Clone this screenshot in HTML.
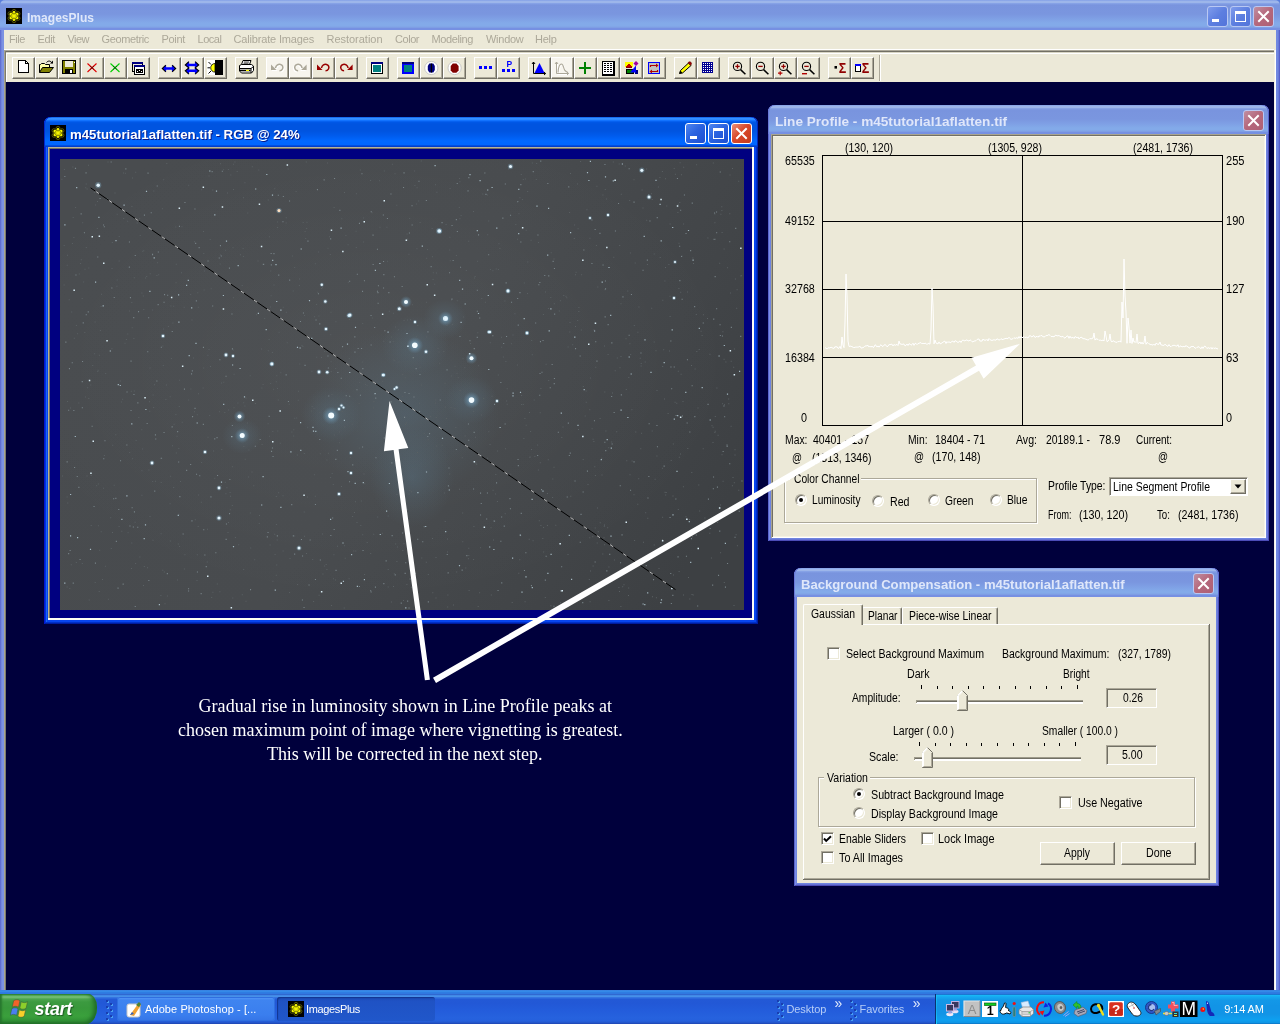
<!DOCTYPE html>
<html><head><meta charset="utf-8"><title>ImagesPlus</title>
<style>
html,body{margin:0;padding:0}
body{width:1280px;height:1024px;overflow:hidden;position:relative;background:#00003c;font-family:"Liberation Sans",sans-serif}
#root{position:absolute;left:0;top:0;width:1280px;height:1024px}
.a{position:absolute;box-sizing:border-box}
.t{position:absolute;white-space:pre;will-change:opacity}
svg{position:absolute;overflow:visible}
.tb{position:absolute;box-sizing:border-box;width:23px;height:22px;top:57px;background:#ece9d8;border:1px solid;border-color:#fff #716f64 #716f64 #fff;box-shadow:inset -1px -1px 0 #aca899}
.tb svg{left:2px;top:2px;width:16px;height:16px;will-change:opacity}
.btn{position:absolute;box-sizing:border-box;background:#ece9d8;border:1px solid;border-color:#fff #716f64 #716f64 #fff;box-shadow:inset -1px -1px 0 #aca899}
.sunk{position:absolute;box-sizing:border-box;border:1px solid;border-color:#aca899 #fff #fff #aca899;box-shadow:inset 1px 1px 0 #716f64}
.cb{position:absolute;box-sizing:border-box;width:13px;height:13px;background:#fff;border:1px solid;border-color:#aca899 #fff #fff #aca899;box-shadow:inset 1px 1px 0 #716f64,inset -1px -1px 0 #ece9d8}
.rb{position:absolute;box-sizing:border-box;width:12px;height:12px;border-radius:50%;background:#fff;border:1px solid;border-color:#aca899 #fff #fff #aca899;box-shadow:inset 1px 1px 0 #716f64,inset -1px -1px 0 #ece9d8}
.grp{position:absolute;box-sizing:border-box;border:1px solid #aca899;box-shadow:1px 1px 0 #fff,inset 1px 1px 0 #fff}
</style></head>
<body>
<div class="a" style="left:0px;top:0px;width:1280px;height:30px;background:linear-gradient(to bottom,#7a98e6 0,#9db6ea 1px,#9db6ea 2.5px,#86a2e6 3.5px,#7994de 5px,#7a96df 14px,#7e9ee4 18px,#83aae9 23px,#83aae9 26px,#7e9ee4 27.5px,#7690e2 28.5px,#7690e2 30px);border-radius:5px 5px 0 0"></div>
<div class="a" style="left:0;top:0;width:1280px;height:30px;z-index:-1;background:#5a7edc"></div>
<div class="a" style="left:0px;top:30px;width:4px;height:960px;background:linear-gradient(to right,#5965cc 0,#6a7ad8 1px,#7c92e2 2px,#7c92e2 4px);"></div>
<div class="a" style="left:1276px;top:30px;width:4px;height:960px;background:linear-gradient(to right,#7189e2 0,#6f86e0 2px,#5f6ed2 3px,#4a4fc0 4px);"></div>
<div class="a" style="left:1274px;top:50px;width:1px;height:940px;background:#f3f1e4;"></div>
<div class="a" style="left:1275px;top:50px;width:1px;height:940px;background:#fff;"></div>
<svg style="left:6px;top:8px" width="16" height="16" viewBox="0 0 16 16"><rect width="16" height="16" fill="#000"/><g fill="none" stroke="#6e6e08" stroke-width="0.8"><circle cx="11.98" cy="10.30" r="2.0"/><circle cx="8.00" cy="12.60" r="2.0"/><circle cx="4.02" cy="10.30" r="2.0"/><circle cx="4.02" cy="5.70" r="2.0"/><circle cx="8.00" cy="3.40" r="2.0"/><circle cx="11.98" cy="5.70" r="2.0"/></g><g fill="#f6f600"><ellipse cx="8" cy="4.900" rx="1.350" ry="2.100" transform="rotate(0 8 8)"/><ellipse cx="8" cy="4.900" rx="1.350" ry="2.100" transform="rotate(60 8 8)"/><ellipse cx="8" cy="4.900" rx="1.350" ry="2.100" transform="rotate(120 8 8)"/><ellipse cx="8" cy="4.900" rx="1.350" ry="2.100" transform="rotate(180 8 8)"/><ellipse cx="8" cy="4.900" rx="1.350" ry="2.100" transform="rotate(240 8 8)"/><ellipse cx="8" cy="4.900" rx="1.350" ry="2.100" transform="rotate(300 8 8)"/><circle cx="8" cy="8" r="1.500"/></g><g fill="#3c3c00"><circle cx="10.17" cy="9.25" r=".5"/><circle cx="8.00" cy="10.50" r=".5"/><circle cx="5.83" cy="9.25" r=".5"/><circle cx="5.83" cy="6.75" r=".5"/><circle cx="8.00" cy="5.50" r=".5"/><circle cx="10.17" cy="6.75" r=".5"/><circle cx="8" cy="5.300" r=".45"/><circle cx="8" cy="10.700" r=".45"/></g></svg>
<div class="t" style="left:26.5px;top:10.75px;font:bold 13.5px/1 'Liberation Sans',sans-serif;color:#dfe7fa;transform:scaleX(0.8929);transform-origin:0 0;">ImagesPlus</div>
<div class="a" style="left:1207px;top:6px;width:21px;height:21px;border:1px solid #b9c8f3;border-radius:3px;background:linear-gradient(135deg,#7f9cec 0,#5d7fe0 50%,#5374da 100%)"></div>
<div class="a" style="left:1212px;top:19px;width:7px;height:3px;background:#fff;"></div>
<div class="a" style="left:1230px;top:6px;width:21px;height:21px;border:1px solid #b9c8f3;border-radius:3px;background:linear-gradient(135deg,#7f9cec 0,#5d7fe0 50%,#5374da 100%)"></div>
<div class="a" style="left:1235px;top:11px;width:11px;height:11px;border:1px solid #fff;border-top-width:3px"></div>
<div class="a" style="left:1253px;top:6px;width:21px;height:21px;border:1px solid #b9c8f3;border-radius:3px;background:linear-gradient(135deg,#c08fa2 0,#b5677b 50%,#ad6075 100%)"></div>
<svg style="left:1253px;top:6px" width="21" height="21" viewBox="0 0 21 21"><path d="M6 6L15 15M15 6L6 15" stroke="#fff" stroke-width="2" fill="none" stroke-linecap="square"/></svg>
<div class="a" style="left:4px;top:30px;width:1272px;height:20px;background:#ece9d8;"></div>
<div class="t" style="left:9px;top:33.50px;font:11px/1 'Liberation Sans',sans-serif;color:#aca899;letter-spacing:-0.431px;">File</div>
<div class="t" style="left:37.5px;top:33.50px;font:11px/1 'Liberation Sans',sans-serif;color:#aca899;letter-spacing:-0.364px;">Edit</div>
<div class="t" style="left:67.5px;top:33.50px;font:11px/1 'Liberation Sans',sans-serif;color:#aca899;letter-spacing:-0.536px;">View</div>
<div class="t" style="left:101.5px;top:33.50px;font:11px/1 'Liberation Sans',sans-serif;color:#aca899;letter-spacing:-0.359px;">Geometric</div>
<div class="t" style="left:161.5px;top:33.50px;font:11px/1 'Liberation Sans',sans-serif;color:#aca899;letter-spacing:-0.314px;">Point</div>
<div class="t" style="left:197.5px;top:33.50px;font:11px/1 'Liberation Sans',sans-serif;color:#aca899;letter-spacing:-0.459px;">Local</div>
<div class="t" style="left:233.5px;top:33.50px;font:11px/1 'Liberation Sans',sans-serif;color:#aca899;letter-spacing:-0.165px;">Calibrate Images</div>
<div class="t" style="left:326.5px;top:33.50px;font:11px/1 'Liberation Sans',sans-serif;color:#aca899;letter-spacing:-0.023px;">Restoration</div>
<div class="t" style="left:395px;top:33.50px;font:11px/1 'Liberation Sans',sans-serif;color:#aca899;letter-spacing:-0.457px;">Color</div>
<div class="t" style="left:431.5px;top:33.50px;font:11px/1 'Liberation Sans',sans-serif;color:#aca899;letter-spacing:-0.392px;">Modeling</div>
<div class="t" style="left:486px;top:33.50px;font:11px/1 'Liberation Sans',sans-serif;color:#aca899;letter-spacing:-0.270px;">Window</div>
<div class="t" style="left:535px;top:33.50px;font:11px/1 'Liberation Sans',sans-serif;color:#aca899;letter-spacing:-0.280px;">Help</div>
<div class="a" style="left:4px;top:49px;width:1270px;height:1px;background:#fff;"></div>
<div class="a" style="left:4px;top:50px;width:1270px;height:1px;background:#aca899;"></div>
<div class="a" style="left:5px;top:51px;width:1269px;height:1px;background:#716f64;"></div>
<div class="a" style="left:6px;top:52px;width:1268px;height:1px;background:#d8d5c4;"></div>
<div class="a" style="left:6px;top:53px;width:1268px;height:1px;background:#fff;"></div>
<div class="a" style="left:6px;top:54px;width:1268px;height:28px;background:#ece9d8;"></div>
<div class="a" style="left:6px;top:53px;width:1px;height:29px;background:#fff;"></div>
<div class="a" style="left:879px;top:55px;width:1px;height:26px;background:#aca899;"></div>
<div class="a" style="left:880px;top:55px;width:1px;height:26px;background:#fff;"></div>
<div class="a" style="left:4px;top:50px;width:1px;height:940px;background:#a8a590;"></div>
<div class="a" style="left:5px;top:51px;width:1px;height:939px;background:#7d7a6c;"></div>
<div class="tb" style="left:12px"><svg viewBox="0 0 16 16"><g shape-rendering="crispEdges"><path d="M3.5 0.5h7l3 3v9h-10z" fill="#fff" stroke="#000"/><path d="M10.5 0.5v3h3" fill="none" stroke="#000"/></g></svg></div>
<div class="tb" style="left:35px"><svg viewBox="0 0 16 16"><path d="M1.5 12.5V4.5h1l1-1h3l1 1h4v3" fill="#ffffa8" stroke="#000"/><path d="M1.5 12.5l3-5h11l-4 5z" fill="#808000" stroke="#000"/><path d="M8.5 2.5c1.5-2 4.5-2 5.5.8" fill="none" stroke="#000"/><path d="M12 3.5h3v-3z" fill="#000"/></svg></div>
<div class="tb" style="left:58px"><svg viewBox="0 0 16 16"><g shape-rendering="crispEdges"><rect x="1.5" y="0.5" width="13" height="13" fill="#808000" stroke="#000"/><rect x="4" y="1" width="8" height="6" fill="#ece9d8"/><rect x="4" y="9" width="8" height="4" fill="#000"/><rect x="9" y="10" width="2" height="3" fill="#fff"/><rect x="13" y="2" width="1" height="1" fill="#fff"/></g></svg></div>
<div class="tb" style="left:81px"><svg viewBox="0 0 16 16"><path d="M3.5 3.5l9 8.5M12.5 3.5l-9 8.5" stroke="#e00000" stroke-width="1.1" fill="none"/><path d="M6 6l4 3.6M10 6l-4 3.6" stroke="#300000" stroke-width=".6"/></svg></div>
<div class="tb" style="left:104px"><svg viewBox="0 0 16 16"><path d="M3.5 3.5l9 8.5M12.5 3.5l-9 8.5" stroke="#00d000" stroke-width="1.1" fill="none"/><path d="M6 6l4 3.6M10 6l-4 3.6" stroke="#003000" stroke-width=".6"/></svg></div>
<div class="tb" style="left:127px"><svg viewBox="0 0 16 16"><g shape-rendering="crispEdges"><rect x="2.5" y="2.5" width="10" height="9" fill="#ece9d8" stroke="#000"/><rect x="2" y="2" width="11" height="2" fill="#000080"/><rect x="4.5" y="5.5" width="10" height="9" fill="#fff" stroke="#000"/><rect x="4" y="5" width="11" height="2" fill="#000080"/><rect x="6" y="9" width="7" height="4" fill="#000"/><rect x="7" y="11" width="1" height="1" fill="#fff"/><rect x="9" y="10" width="1" height="1" fill="#fff"/><rect x="11" y="11" width="1" height="1" fill="#fff"/></g></svg></div>
<div class="tb" style="left:158px"><svg viewBox="0 0 16 16"><path d="M1.300 8.500l3.800-3.400v2.200h5.800V5.100l3.800 3.400-3.800 3.400V9.700H5.100v2.200z" fill="#0000ff"/><path d="M4.800 5.200L1.300 8.500l3.500 3.300M11.200 5.200l3.500 3.300-3.500 3.300" fill="none" stroke="#000" stroke-width="1.100"/></svg></div>
<div class="tb" style="left:181px"><svg viewBox="0 0 16 16"><path d="M1.300 5l3.800-3.400v2.200h5.800V1.600l3.800 3.400-3.800 3.400V6.200H5.100v2.200zM1.300 10.800l3.800-3.400v2.200h5.800V7.400l3.800 3.400-3.800 3.400V12H5.100v2.200z" fill="#0000ff"/><path d="M4.800 1.700L1.300 5l3.500 2.900-3.500 2.900 3.500 3.300M11.200 1.700l3.500 3.300-3.500 2.900 3.500 2.900-3.500 3.300" fill="none" stroke="#000" stroke-width="1.100"/><rect x="6" y="6.800" width="4" height="2.200" fill="#ece9d8"/></svg></div>
<div class="tb" style="left:204px"><svg viewBox="0 0 16 16"><g shape-rendering="crispEdges"><rect x="0" y="0" width="8" height="15" fill="#fff"/><rect x="8" y="0" width="8" height="15" fill="#000"/></g><path d="M8 3.500a4.300 4.300 0 0 0 0 8.600z" fill="#ffff00" stroke="#000" stroke-width=".8"/><path d="M1.500 2l2.500 2.500M1.500 13.500l2.500-2.500M0.500 7.800h2.500" stroke="#000" stroke-width="1"/></svg></div>
<div class="tb" style="left:235px"><svg viewBox="0 0 16 16"><path d="M5 0.500h8l-1.500 4H3.500z" fill="#fff" stroke="#000"/><path d="M6 2h5M5.500 3.300h5" stroke="#000" stroke-width=".7"/><path d="M1.500 5.500l2-1h10l2 1.500v4.500l-2 2.500h-10l-2-2z" fill="#fff" stroke="#000"/><path d="M1.500 8.500h11.500l2.500-2M13 8.500v4.500" stroke="#000" fill="none"/><path d="M2 10.500h10.500" stroke="#000" stroke-width="1.600"/><rect x="8" y="9.800" width="3" height="1.200" fill="#ffff00"/></svg></div>
<div class="tb" style="left:266px;background:#f7f5ee"><svg viewBox="0 0 16 16"><g><g transform="translate(1,1)"><path d="M6.500 8c0.500-3 3-4 5-3.500s3 2.500 2 4.500c-.5 1-1.500 1.800-3 1.800" fill="none" stroke="#fff" stroke-width="1.500"/><path d="M2 4.500V10h5.500z" fill="#fff"/></g><path d="M6.500 8c0.500-3 3-4 5-3.500s3 2.500 2 4.500c-.5 1-1.500 1.800-3 1.800" fill="none" stroke="#aca899" stroke-width="1.500"/><path d="M2 4.500V10h5.500z" fill="#aca899"/></g></svg></div>
<div class="tb" style="left:289px;background:#f7f5ee"><svg viewBox="0 0 16 16"><g transform="translate(16.6,0) scale(-1,1)"><g transform="translate(1,1)"><path d="M6.500 8c0.500-3 3-4 5-3.500s3 2.500 2 4.500c-.5 1-1.500 1.800-3 1.800" fill="none" stroke="#fff" stroke-width="1.500"/><path d="M2 4.500V10h5.500z" fill="#fff"/></g><path d="M6.500 8c0.500-3 3-4 5-3.500s3 2.500 2 4.500c-.5 1-1.500 1.800-3 1.800" fill="none" stroke="#aca899" stroke-width="1.500"/><path d="M2 4.500V10h5.500z" fill="#aca899"/></g></svg></div>
<div class="tb" style="left:312px"><svg viewBox="0 0 16 16"><g><path d="M6.500 8c0.500-3 3-4 5-3.500s3 2.500 2 4.500c-.5 1-1.500 1.800-3 1.800" fill="none" stroke="#980000" stroke-width="1.500"/><path d="M2 4.500V10h5.500z" fill="#980000"/></g></svg></div>
<div class="tb" style="left:335px"><svg viewBox="0 0 16 16"><g transform="translate(16.6,0) scale(-1,1)"><path d="M6.500 8c0.500-3 3-4 5-3.500s3 2.500 2 4.500c-.5 1-1.500 1.800-3 1.800" fill="none" stroke="#980000" stroke-width="1.500"/><path d="M2 4.500V10h5.500z" fill="#980000"/></g></svg></div>
<div class="tb" style="left:366px"><svg viewBox="0 0 16 16"><g shape-rendering="crispEdges"><rect x="2.500" y="3.500" width="11" height="10" fill="#fff" stroke="#000"/><rect x="2" y="2" width="12" height="2" fill="#000080"/><rect x="4" y="5" width="8" height="7" fill="#008080"/></g></svg></div>
<div class="tb" style="left:397px"><svg viewBox="0 0 16 16"><g shape-rendering="crispEdges"><rect x="2" y="2" width="12" height="12" fill="#0000ff"/><rect x="2" y="2" width="12" height="2" fill="#000080"/><rect x="4" y="5" width="8" height="7" fill="#008080"/></g></svg></div>
<div class="tb" style="left:420px"><svg viewBox="0 0 16 16"><circle cx="8.300" cy="8" r="6.600" fill="#fff" stroke="#bdbdbd" stroke-width=".8"/><path d="M6.300 3.500h4l1.500 2.500v4l-1.500 2.500h-4L4.800 10V6z" fill="#000080"/><path d="M8.400 3.500v9" stroke="#000" stroke-width="1.200"/></svg></div>
<div class="tb" style="left:443px"><svg viewBox="0 0 16 16"><circle cx="8.600" cy="8" r="6.600" fill="#fff" stroke="#bdbdbd" stroke-width=".8"/><path d="M6.800 3.600h3.600l2.200 2.400v4.400l-2.200 2.400H6.800L4.700 10.400V6z" fill="#800000"/></svg></div>
<div class="tb" style="left:474px"><svg viewBox="0 0 16 16"><g shape-rendering="crispEdges" fill="#0000ff"><rect x="2" y="6" width="3" height="3"/><rect x="7" y="6" width="3" height="3"/><rect x="12" y="6" width="3" height="3"/></g></svg></div>
<div class="tb" style="left:497px"><svg viewBox="0 0 16 16"><g shape-rendering="crispEdges" fill="#0000ff"><rect x="2" y="9" width="3" height="3"/><rect x="7" y="9" width="3" height="3"/><rect x="12" y="9" width="3" height="3"/></g><text x="6.600" y="7.200" font-family="Liberation Sans,sans-serif" font-size="8.500" font-weight="bold" fill="#0000ff">P</text></svg></div>
<div class="tb" style="left:528px"><svg viewBox="0 0 16 16"><path d="M3.500 13l5-10 5 10z" fill="#0000ff"/><path d="M2.500 2v11.500h12" fill="none" stroke="#000" stroke-width="1"/><path d="M1 4l1.500-2l1.500 2M13 12l1.700 1.500-1.700 1.500" fill="none" stroke="#000"/></svg></div>
<div class="tb" style="left:551px;background:#f7f5ee"><svg viewBox="0 0 16 16"><g transform="translate(1,1)" stroke="#fff" fill="none"><path d="M2.500 2v11.500h12"/><path d="M4 12.500c.5-7 1.500-8.500 3.500-8.500s2 5 3.500 6.500 2 1.500 3 2"/></g><path d="M2.500 2v11.500h12" fill="none" stroke="#aca899" stroke-width="1"/><path d="M1 4l1.500-2l1.500 2M13 12l1.700 1.500-1.700 1.500" fill="none" stroke="#aca899"/><path d="M4 12.500c.5-7 1.500-8.500 3.500-8.500s2 5 3.500 6.500 2 1.500 3 2" fill="none" stroke="#aca899" stroke-width="1.100"/></svg></div>
<div class="tb" style="left:574px"><svg viewBox="0 0 16 16"><g shape-rendering="crispEdges"><rect x="7" y="2" width="2" height="12" fill="#008000"/><rect x="2" y="7" width="12" height="2" fill="#008000"/></g></svg></div>
<div class="tb" style="left:597px"><svg viewBox="0 0 16 16"><g shape-rendering="crispEdges"><rect x="2.500" y="1.500" width="11" height="13" fill="#fff" stroke="#000" stroke-width="1"/><rect x="2" y="1" width="12" height="14" fill="none" stroke="#000" stroke-width="1"/><g fill="#000"><rect x="4" y="3" width="2" height="1"/><rect x="4" y="5" width="2" height="1"/><rect x="4" y="7" width="2" height="1"/><rect x="4" y="9" width="2" height="1"/><rect x="4" y="11" width="2" height="1"/><rect x="7" y="3" width="2" height="1"/><rect x="7" y="5" width="2" height="1"/><rect x="7" y="7" width="2" height="1"/><rect x="7" y="9" width="2" height="1"/><rect x="7" y="11" width="2" height="1"/><rect x="10" y="3" width="2" height="1"/><rect x="10" y="5" width="2" height="1"/><rect x="10" y="7" width="2" height="1"/><rect x="10" y="9" width="2" height="1"/><rect x="10" y="11" width="2" height="1"/></g></g></svg></div>
<div class="tb" style="left:620px"><svg viewBox="0 0 16 16"><g shape-rendering="crispEdges"><rect x="2" y="2" width="8" height="5" fill="#ffff00"/><path d="M3 7l3-3.500 3 3.500z" fill="#c00000"/><rect x="3" y="7" width="6" height="1" fill="#800000"/><rect x="3.500" y="9.500" width="7" height="4" fill="#008000" stroke="#000"/><rect x="12" y="10" width="3" height="4" fill="#000080"/></g><path d="M13 5.500L7 12.500h6z" fill="#0000ff"/><path d="M13 1l2.500 2.500L13 6l-2.500-2.500z" fill="#a000a0"/></svg></div>
<div class="tb" style="left:643px"><svg viewBox="0 0 16 16"><g shape-rendering="crispEdges"><rect x="2.500" y="2.500" width="11" height="11" fill="#c0c0c0" stroke="#0000ff"/></g><path d="M4.500 7V5.500h6M11.500 10v1.500h-6" fill="none" stroke="#b00000" stroke-width="1.200"/><path d="M10 3.500l2.500 2-2.500 2zM6 9.500l-2.500 2 2.500 2z" fill="#b00000"/></svg></div>
<div class="tb" style="left:674px"><svg viewBox="0 0 16 16"><path d="M2.500 13.500l1-3 8-7.500 2.500 2.500-8.500 7.500z" fill="#ffff00" stroke="#000" stroke-width="1"/><path d="M11 2.800c1-1.500 3-1.300 3.500.5 0 1-.4 1.500-1 2z" fill="#a00000" stroke="#600000" stroke-width=".6"/><path d="M2.300 13.800l1.200-3 2 2z" fill="#000"/></svg></div>
<div class="tb" style="left:697px"><svg viewBox="0 0 16 16"><g shape-rendering="crispEdges"><rect x="2" y="2" width="11" height="11" fill="#000090"/><g fill="#fff"><rect x="3" y="3" width="1" height="1"/><rect x="3" y="5" width="1" height="1"/><rect x="3" y="7" width="1" height="1"/><rect x="3" y="9" width="1" height="1"/><rect x="3" y="11" width="1" height="1"/><rect x="5" y="3" width="1" height="1"/><rect x="5" y="5" width="1" height="1"/><rect x="5" y="7" width="1" height="1"/><rect x="5" y="9" width="1" height="1"/><rect x="5" y="11" width="1" height="1"/><rect x="7" y="3" width="1" height="1"/><rect x="7" y="5" width="1" height="1"/><rect x="7" y="7" width="1" height="1"/><rect x="7" y="9" width="1" height="1"/><rect x="7" y="11" width="1" height="1"/><rect x="9" y="3" width="1" height="1"/><rect x="9" y="5" width="1" height="1"/><rect x="9" y="7" width="1" height="1"/><rect x="9" y="9" width="1" height="1"/><rect x="9" y="11" width="1" height="1"/><rect x="11" y="3" width="1" height="1"/><rect x="11" y="5" width="1" height="1"/><rect x="11" y="7" width="1" height="1"/><rect x="11" y="9" width="1" height="1"/><rect x="11" y="11" width="1" height="1"/></g></g></svg></div>
<div class="tb" style="left:728px"><svg viewBox="0 0 16 16"><circle cx="6.500" cy="6.400" r="4.100" fill="none" stroke="#000" stroke-width="1.100"/><path d="M9.600 9.600l4.800 4.600" stroke="#000" stroke-width="1.500"/><path d="M4.300 6.400h4.400" stroke="#900000" stroke-width="1.300"/><path d="M6.500 4.200v4.400" stroke="#900000" stroke-width="1.300"/></svg></div>
<div class="tb" style="left:751px"><svg viewBox="0 0 16 16"><circle cx="6.500" cy="6.400" r="4.100" fill="none" stroke="#000" stroke-width="1.100"/><path d="M9.600 9.600l4.800 4.600" stroke="#000" stroke-width="1.500"/><path d="M4.300 6.400h4.400" stroke="#900000" stroke-width="1.300"/></svg></div>
<div class="tb" style="left:774px"><svg viewBox="0 0 16 16"><circle cx="6.500" cy="6.400" r="4.100" fill="none" stroke="#000" stroke-width="1.100"/><path d="M9.600 9.600l4.800 4.600" stroke="#000" stroke-width="1.500"/><path d="M4.300 6.400h4.400" stroke="#900000" stroke-width="1.300"/><path d="M6.500 4.200v4.400" stroke="#900000" stroke-width="1.300"/><path d="M1 13.200h4.400M3.200 11.200v4" stroke="#b00000" stroke-width="1.200"/></svg></div>
<div class="tb" style="left:797px"><svg viewBox="0 0 16 16"><circle cx="6.500" cy="6.400" r="4.100" fill="none" stroke="#000" stroke-width="1.100"/><path d="M9.600 9.600l4.800 4.600" stroke="#000" stroke-width="1.500"/><path d="M4.300 6.400h4.400" stroke="#900000" stroke-width="1.300"/><path d="M2 13.700h5" stroke="#b00000" stroke-width="1.400"/></svg></div>
<div class="tb" style="left:828px"><svg viewBox="0 0 16 16"><rect x="3.500" y="6" width="2.500" height="2.600" fill="#000"/><text x="7.8" y="12.600" font-family="Liberation Sans,sans-serif" font-size="14.500" font-weight="bold" fill="#900000" textLength="7.500" lengthAdjust="spacingAndGlyphs">Σ</text></svg></div>
<div class="tb" style="left:851px"><svg viewBox="0 0 16 16"><g shape-rendering="crispEdges"><rect x="1.500" y="4.500" width="5" height="7" fill="#fff" stroke="#000"/><rect x="1" y="4" width="6" height="2" fill="#0000ff"/></g><text x="7.8" y="12.600" font-family="Liberation Sans,sans-serif" font-size="14.500" font-weight="bold" fill="#900000" textLength="7.500" lengthAdjust="spacingAndGlyphs">Σ</text></svg></div>
<div class="a" style="left:44px;top:117px;width:714px;height:507px;background:#0845ee;border-radius:7px 7px 0 0;box-shadow:inset 1px 0 0 #0018d0,inset -1px 0 0 #001ca0,inset 0 -1px 0 #001ca0,inset 2px 0 0 #0030e0,inset -2px 0 0 #0030c8,inset 0 -2px 0 #0030c8,inset 3px 0 0 #1a68f0"></div>
<div class="a" style="left:44px;top:117px;width:714px;height:30px;background:linear-gradient(to bottom,#0050e0 0,#2f8bff 1px,#3c96ff 2px,#1273ff 3.5px,#0058e8 5px,#0054e0 7px,#0054e0 14px,#005cee 19px,#0068ff 24px,#0066ff 27.5px,#0044d0 29px,#0038c8 30px);border-radius:7px 7px 0 0;box-shadow:inset 1px 0 0 #0028d0,inset -1px 0 0 #0028c0"></div>
<div class="a" style="left:48px;top:147px;width:706px;height:473px;background:#000080;"></div>
<div class="a" style="left:48px;top:147px;width:706px;height:1px;background:#b8b29c;"></div>
<div class="a" style="left:48px;top:147px;width:1px;height:473px;background:#b8b090;"></div>
<div class="a" style="left:49px;top:148px;width:1px;height:471px;background:#716f64;"></div>
<div class="a" style="left:48px;top:618px;width:706px;height:2px;background:#fffff4;"></div>
<div class="a" style="left:752px;top:147px;width:2px;height:473px;background:#fffff4;"></div>
<div class="a" style="left:49px;top:148px;width:703px;height:1px;background:#716f64;"></div>
<svg style="left:50px;top:125px" width="16" height="16" viewBox="0 0 16 16"><rect width="16" height="16" fill="#000"/><g fill="none" stroke="#6e6e08" stroke-width="0.8"><circle cx="11.98" cy="10.30" r="2.0"/><circle cx="8.00" cy="12.60" r="2.0"/><circle cx="4.02" cy="10.30" r="2.0"/><circle cx="4.02" cy="5.70" r="2.0"/><circle cx="8.00" cy="3.40" r="2.0"/><circle cx="11.98" cy="5.70" r="2.0"/></g><g fill="#f6f600"><ellipse cx="8" cy="4.900" rx="1.350" ry="2.100" transform="rotate(0 8 8)"/><ellipse cx="8" cy="4.900" rx="1.350" ry="2.100" transform="rotate(60 8 8)"/><ellipse cx="8" cy="4.900" rx="1.350" ry="2.100" transform="rotate(120 8 8)"/><ellipse cx="8" cy="4.900" rx="1.350" ry="2.100" transform="rotate(180 8 8)"/><ellipse cx="8" cy="4.900" rx="1.350" ry="2.100" transform="rotate(240 8 8)"/><ellipse cx="8" cy="4.900" rx="1.350" ry="2.100" transform="rotate(300 8 8)"/><circle cx="8" cy="8" r="1.500"/></g><g fill="#3c3c00"><circle cx="10.17" cy="9.25" r=".5"/><circle cx="8.00" cy="10.50" r=".5"/><circle cx="5.83" cy="9.25" r=".5"/><circle cx="5.83" cy="6.75" r=".5"/><circle cx="8.00" cy="5.50" r=".5"/><circle cx="10.17" cy="6.75" r=".5"/><circle cx="8" cy="5.300" r=".45"/><circle cx="8" cy="10.700" r=".45"/></g></svg>
<div class="t" style="left:69.7px;top:127.75px;font:bold 13.5px/1 'Liberation Sans',sans-serif;color:#fff;transform:scaleX(0.9798);transform-origin:0 0;text-shadow:1px 1px 0 #0a1883;">m45tutorial1aflatten.tif - RGB @ 24%</div>
<div class="a" style="left:685px;top:123px;width:21px;height:21px;border:1px solid #fff;border-radius:3px;background:linear-gradient(135deg,#4f86f0 0,#2b63e0 45%,#1d4ed0 100%)"></div>
<div class="a" style="left:690px;top:136px;width:7px;height:3px;background:#fff;"></div>
<div class="a" style="left:708px;top:123px;width:21px;height:21px;border:1px solid #fff;border-radius:3px;background:linear-gradient(135deg,#4f86f0 0,#2b63e0 45%,#1d4ed0 100%)"></div>
<div class="a" style="left:713px;top:128px;width:11px;height:11px;border:1px solid #fff;border-top-width:3px"></div>
<div class="a" style="left:731px;top:123px;width:21px;height:21px;border:1px solid #fff;border-radius:3px;background:linear-gradient(135deg,#e9907a 0,#d9492b 45%,#c63a1c 100%)"></div>
<svg style="left:731px;top:123px" width="21" height="21" viewBox="0 0 21 21"><path d="M6 6L15 15M15 6L6 15" stroke="#fff" stroke-width="2" fill="none" stroke-linecap="square"/></svg>
<svg style="left:60px;top:159px" width="684" height="451" viewBox="0 0 684 451"><defs><linearGradient id="bgg" x1="0" y1="0.3" x2="1" y2="0.7"><stop offset="0" stop-color="#494c4f"/><stop offset="0.5" stop-color="#484b4e"/><stop offset="0.8" stop-color="#424548"/><stop offset="1" stop-color="#3d4043"/></linearGradient><radialGradient id="bgh" cx="45%" cy="45%" r="55%"><stop offset="0" stop-color="#fff" stop-opacity=".035"/><stop offset="1" stop-color="#fff" stop-opacity="0"/></radialGradient><radialGradient id="neb"><stop offset="0" stop-color="#5f8096" stop-opacity=".30"/><stop offset="1" stop-color="#5f7f92" stop-opacity="0"/></radialGradient><radialGradient id="glow"><stop offset="0" stop-color="#bfe6ff" stop-opacity=".9"/><stop offset=".35" stop-color="#7fb4d6" stop-opacity=".45"/><stop offset="1" stop-color="#6b9cba" stop-opacity="0"/></radialGradient></defs><rect width="684" height="451" fill="url(#bgg)"/><rect width="684" height="451" fill="url(#bgh)"/><ellipse cx="355" cy="186" rx="34" ry="30" fill="url(#neb)"/><ellipse cx="271" cy="256" rx="30" ry="28" fill="url(#neb)"/><ellipse cx="411" cy="241" rx="26" ry="24" fill="url(#neb)"/><ellipse cx="345" cy="255" rx="95" ry="85" fill="url(#neb)"/><ellipse cx="385" cy="160" rx="22" ry="20" fill="url(#neb)"/><ellipse cx="182" cy="277" rx="20" ry="18" fill="url(#neb)"/><ellipse cx="352" cy="318" rx="42" ry="50" fill="url(#neb)"/><path d="M92.5 380.7h1v1h-1zM521.1 115.3h1v1h-1zM338.4 202.4h1v1h-1zM444.7 354.3h1v1h-1zM64.9 13.7h1v1h-1zM570.2 194.9h1v1h-1zM520.1 1.9h1v1h-1zM304.3 324.2h1v1h-1zM156.8 424.5h1v1h-1zM614.9 14.7h1v1h-1zM18.3 243.6h1v1h-1zM640.6 171.8h1v1h-1zM148.5 190.1h1v1h-1zM20.8 100.3h1v1h-1zM299.2 223.1h1v1h-1zM159.7 104.4h1v1h-1zM150.0 206.9h1v1h-1zM198.3 10.6h1v1h-1zM571.4 250.3h1v1h-1zM438.4 84.3h1v1h-1zM676.9 386.3h1v1h-1zM83.3 150.0h1v1h-1zM492.3 319.6h1v1h-1zM638.7 190.1h1v1h-1zM566.3 301.3h1v1h-1zM207.6 264.2h1v1h-1zM602.0 380.1h1v1h-1zM345.1 264.9h1v1h-1zM24.5 109.7h1v1h-1zM544.0 186.6h1v1h-1zM118.8 246.9h1v1h-1zM479.8 303.2h1v1h-1zM256.2 197.7h1v1h-1zM347.2 349.7h1v1h-1zM355.8 177.2h1v1h-1zM334.5 14.2h1v1h-1zM30.6 316.1h1v1h-1zM670.6 266.7h1v1h-1zM269.0 77.3h1v1h-1zM343.0 441.0h1v1h-1zM525.7 242.7h1v1h-1zM586.9 105.0h1v1h-1zM350.9 427.7h1v1h-1zM394.5 206.7h1v1h-1zM184.4 246.5h1v1h-1zM652.8 3.6h1v1h-1zM534.7 368.6h1v1h-1zM604.5 332.7h1v1h-1zM552.0 233.4h1v1h-1zM383.3 191.9h1v1h-1zM39.2 390.8h1v1h-1zM389.2 90.5h1v1h-1zM344.7 218.2h1v1h-1zM244.0 156.0h1v1h-1zM367.7 280.3h1v1h-1zM418.1 206.2h1v1h-1zM20.1 103.9h1v1h-1zM121.7 262.8h1v1h-1zM587.3 358.7h1v1h-1zM543.8 366.8h1v1h-1zM174.9 378.1h1v1h-1zM459.4 38.3h1v1h-1zM12.4 7.5h1v1h-1zM515.6 112.8h1v1h-1zM75.6 280.9h1v1h-1zM235.6 32.1h1v1h-1zM109.7 237.3h1v1h-1zM115.5 123.3h1v1h-1zM485.6 204.7h1v1h-1zM220.3 213.2h1v1h-1zM17.1 174.2h1v1h-1zM287.6 85.2h1v1h-1zM75.1 404.1h1v1h-1zM348.4 94.7h1v1h-1zM413.4 367.0h1v1h-1zM15.2 9.0h1v1h-1zM100.7 323.0h1v1h-1zM110.1 316.7h1v1h-1zM462.8 245.0h1v1h-1zM151.2 438.1h1v1h-1zM544.3 232.4h1v1h-1zM153.0 291.5h1v1h-1zM269.9 259.0h1v1h-1zM219.8 283.7h1v1h-1zM41.0 134.8h1v1h-1zM660.1 393.2h1v1h-1zM209.6 385.6h1v1h-1zM212.4 421.8h1v1h-1zM507.6 187.4h1v1h-1zM172.9 4.8h1v1h-1zM599.4 18.0h1v1h-1zM559.0 432.1h1v1h-1zM389.4 77.8h1v1h-1zM592.0 437.3h1v1h-1zM480.4 229.0h1v1h-1zM258.4 156.4h1v1h-1zM141.1 303.0h1v1h-1zM295.8 88.0h1v1h-1zM72.1 299.3h1v1h-1zM202.6 224.9h1v1h-1zM222.6 391.5h1v1h-1zM613.7 9.1h1v1h-1zM137.8 147.8h1v1h-1zM673.2 351.6h1v1h-1zM231.9 96.4h1v1h-1zM460.3 376.3h1v1h-1zM635.8 155.0h1v1h-1zM601.9 308.8h1v1h-1zM330.9 442.5h1v1h-1zM160.8 326.0h1v1h-1zM58.7 77.0h1v1h-1zM621.4 96.4h1v1h-1zM518.0 269.9h1v1h-1zM573.8 165.9h1v1h-1zM232.7 131.5h1v1h-1zM591.7 271.6h1v1h-1zM650.9 398.5h1v1h-1zM93.2 247.9h1v1h-1zM72.0 18.5h1v1h-1zM50.8 389.0h1v1h-1zM537.7 372.2h1v1h-1zM233.2 276.6h1v1h-1zM533.5 170.4h1v1h-1zM389.7 101.2h1v1h-1zM56.7 120.5h1v1h-1zM607.6 253.9h1v1h-1zM631.0 206.1h1v1h-1zM189.8 353.6h1v1h-1zM564.7 6.5h1v1h-1zM457.6 42.1h1v1h-1zM79.4 397.5h1v1h-1zM28.3 108.4h1v1h-1zM673.9 189.6h1v1h-1zM79.7 76.0h1v1h-1zM165.4 334.3h1v1h-1zM71.0 409.0h1v1h-1zM258.6 435.7h1v1h-1zM620.2 132.7h1v1h-1zM173.6 214.7h1v1h-1zM69.2 293.1h1v1h-1zM28.0 5.7h1v1h-1zM670.1 133.4h1v1h-1zM407.3 202.5h1v1h-1zM214.3 29.2h1v1h-1zM623.0 435.5h1v1h-1zM661.4 50.9h1v1h-1zM147.5 277.8h1v1h-1zM668.3 244.2h1v1h-1zM469.7 297.5h1v1h-1zM177.4 243.6h1v1h-1zM210.3 111.4h1v1h-1zM56.4 126.8h1v1h-1zM670.7 201.7h1v1h-1zM445.0 289.3h1v1h-1zM641.6 175.9h1v1h-1zM209.9 147.6h1v1h-1zM216.7 380.5h1v1h-1zM609.5 136.7h1v1h-1zM228.7 244.8h1v1h-1zM395.3 268.0h1v1h-1zM167.9 10.1h1v1h-1zM167.0 33.4h1v1h-1zM376.4 32.8h1v1h-1zM52.2 285.7h1v1h-1zM199.0 355.9h1v1h-1zM336.9 387.5h1v1h-1zM106.0 225.6h1v1h-1zM542.4 35.5h1v1h-1zM647.4 78.6h1v1h-1zM529.6 442.2h1v1h-1zM560.5 144.3h1v1h-1zM73.8 231.4h1v1h-1zM627.1 132.5h1v1h-1zM609.6 64.5h1v1h-1zM621.0 15.2h1v1h-1zM216.2 405.6h1v1h-1zM548.4 407.4h1v1h-1zM573.5 335.3h1v1h-1zM470.6 80.8h1v1h-1zM295.6 71.7h1v1h-1zM487.8 300.2h1v1h-1zM173.0 29.9h1v1h-1zM657.1 363.1h1v1h-1zM375.1 243.5h1v1h-1zM580.7 204.1h1v1h-1zM270.5 152.7h1v1h-1zM176.7 11.9h1v1h-1zM441.2 187.7h1v1h-1zM389.6 28.9h1v1h-1zM242.7 63.0h1v1h-1zM86.2 117.1h1v1h-1zM565.5 179.2h1v1h-1zM274.1 275.4h1v1h-1zM160.0 4.3h1v1h-1zM361.0 225.4h1v1h-1zM442.9 197.4h1v1h-1zM468.5 328.7h1v1h-1zM163.3 222.8h1v1h-1zM327.1 101.8h1v1h-1zM281.7 252.1h1v1h-1zM618.6 412.1h1v1h-1zM188.4 290.6h1v1h-1zM33.8 33.1h1v1h-1zM349.5 394.1h1v1h-1zM109.6 344.2h1v1h-1zM602.3 140.7h1v1h-1zM472.6 381.3h1v1h-1zM254.1 315.2h1v1h-1zM502.5 267.4h1v1h-1zM584.1 402.7h1v1h-1zM654.8 256.9h1v1h-1zM121.0 113.3h1v1h-1zM149.2 256.1h1v1h-1zM517.0 24.4h1v1h-1zM465.2 322.3h1v1h-1zM238.0 231.7h1v1h-1zM113.2 328.0h1v1h-1zM28.7 440.6h1v1h-1zM551.2 282.5h1v1h-1zM183.2 410.0h1v1h-1zM654.4 63.3h1v1h-1zM529.3 378.2h1v1h-1zM450.3 314.8h1v1h-1zM304.1 415.1h1v1h-1zM662.4 172.3h1v1h-1zM547.6 194.9h1v1h-1zM113.2 146.8h1v1h-1zM87.0 408.2h1v1h-1zM654.4 54.4h1v1h-1zM410.1 183.9h1v1h-1zM81.4 133.4h1v1h-1zM170.0 336.8h1v1h-1zM3.7 86.0h1v1h-1zM299.8 10.4h1v1h-1zM428.3 272.3h1v1h-1zM569.9 93.6h1v1h-1zM194.9 244.0h1v1h-1zM187.1 263.4h1v1h-1zM171.9 307.2h1v1h-1zM539.7 363.3h1v1h-1zM664.0 245.3h1v1h-1zM335.2 384.4h1v1h-1zM524.7 256.6h1v1h-1zM262.0 128.3h1v1h-1zM74.6 362.8h1v1h-1zM81.4 335.8h1v1h-1zM372.3 433.3h1v1h-1zM519.3 437.1h1v1h-1zM94.0 225.2h1v1h-1zM390.9 140.4h1v1h-1zM343.6 160.9h1v1h-1zM360.8 1.4h1v1h-1zM302.2 202.4h1v1h-1zM208.6 179.9h1v1h-1zM534.3 307.2h1v1h-1zM336.3 291.2h1v1h-1zM258.1 92.4h1v1h-1zM3.6 125.4h1v1h-1zM408.3 396.0h1v1h-1zM565.8 229.9h1v1h-1zM673.2 207.8h1v1h-1zM569.4 184.2h1v1h-1zM508.1 443.4h1v1h-1zM208.9 77.3h1v1h-1zM423.2 238.9h1v1h-1zM245.8 2.6h1v1h-1zM266.0 191.8h1v1h-1zM277.0 386.8h1v1h-1zM399.0 329.8h1v1h-1zM612.5 336.5h1v1h-1zM336.5 335.1h1v1h-1zM437.1 291.6h1v1h-1zM429.8 183.3h1v1h-1zM429.5 284.9h1v1h-1zM639.2 351.5h1v1h-1zM577.3 344.8h1v1h-1zM556.2 272.2h1v1h-1zM239.0 119.5h1v1h-1zM483.2 392.5h1v1h-1zM371.6 69.1h1v1h-1zM568.3 218.1h1v1h-1zM319.1 21.3h1v1h-1zM348.5 334.6h1v1h-1zM288.8 160.1h1v1h-1zM448.3 9.8h1v1h-1zM346.4 424.9h1v1h-1zM471.2 181.1h1v1h-1zM470.1 272.0h1v1h-1zM143.3 94.1h1v1h-1zM604.4 121.5h1v1h-1zM52.0 373.1h1v1h-1zM357.3 166.0h1v1h-1zM349.3 331.1h1v1h-1zM115.8 293.6h1v1h-1zM486.9 366.1h1v1h-1zM184.7 274.1h1v1h-1zM159.1 252.3h1v1h-1zM118.4 354.8h1v1h-1zM591.2 148.7h1v1h-1zM152.4 432.8h1v1h-1zM482.3 379.0h1v1h-1zM21.8 403.9h1v1h-1zM424.9 142.8h1v1h-1zM295.0 342.2h1v1h-1zM535.9 86.1h1v1h-1zM427.2 75.2h1v1h-1zM663.6 199.7h1v1h-1zM622.9 327.3h1v1h-1zM413.9 118.4h1v1h-1zM359.6 63.1h1v1h-1zM95.0 321.7h1v1h-1zM246.9 337.6h1v1h-1zM164.8 322.7h1v1h-1zM490.3 137.9h1v1h-1zM73.4 178.9h1v1h-1zM336.3 45.8h1v1h-1zM128.2 25.8h1v1h-1zM407.9 399.2h1v1h-1zM148.5 16.6h1v1h-1zM480.4 366.1h1v1h-1zM657.6 275.7h1v1h-1zM234.2 376.4h1v1h-1zM81.4 311.3h1v1h-1zM65.9 180.1h1v1h-1zM338.1 170.3h1v1h-1zM115.8 104.8h1v1h-1zM559.5 208.2h1v1h-1zM395.9 95.9h1v1h-1zM487.9 148.9h1v1h-1zM405.3 408.5h1v1h-1zM678.2 21.7h1v1h-1zM544.1 385.2h1v1h-1zM218.6 172.7h1v1h-1zM396.2 412.6h1v1h-1zM273.4 395.3h1v1h-1zM517.6 69.2h1v1h-1zM623.2 7.8h1v1h-1zM99.9 298.8h1v1h-1zM39.9 171.0h1v1h-1zM89.5 208.4h1v1h-1zM573.0 406.9h1v1h-1zM25.2 28.3h1v1h-1zM573.5 20.2h1v1h-1zM187.3 53.6h1v1h-1zM63.0 13.4h1v1h-1zM435.1 334.6h1v1h-1zM468.7 379.8h1v1h-1zM452.5 175.6h1v1h-1zM430.8 435.4h1v1h-1zM437.9 109.9h1v1h-1zM42.0 420.0h1v1h-1zM403.1 157.6h1v1h-1zM413.2 252.0h1v1h-1zM356.6 28.2h1v1h-1zM241.5 185.9h1v1h-1zM136.8 395.3h1v1h-1zM289.8 297.7h1v1h-1zM486.9 334.0h1v1h-1zM492.1 338.0h1v1h-1zM172.3 438.4h1v1h-1zM103.8 412.6h1v1h-1zM583.0 382.8h1v1h-1zM37.0 41.9h1v1h-1zM554.7 211.2h1v1h-1zM253.1 442.1h1v1h-1zM28.3 239.1h1v1h-1zM302.9 58.4h1v1h-1zM270.1 318.0h1v1h-1zM601.9 12.0h1v1h-1zM358.2 41.5h1v1h-1zM546.1 39.4h1v1h-1zM24.3 173.1h1v1h-1zM499.9 141.3h1v1h-1zM89.5 357.0h1v1h-1zM550.5 384.4h1v1h-1zM207.8 191.3h1v1h-1zM168.1 250.6h1v1h-1zM225.8 152.7h1v1h-1zM534.6 429.4h1v1h-1zM398.8 47.9h1v1h-1zM445.4 202.0h1v1h-1zM673.8 323.3h1v1h-1zM569.5 315.2h1v1h-1zM365.8 402.8h1v1h-1zM567.3 131.5h1v1h-1zM107.9 166.9h1v1h-1zM355.9 44.6h1v1h-1zM236.2 258.6h1v1h-1zM30.7 366.1h1v1h-1zM444.4 141.5h1v1h-1zM204.2 159.0h1v1h-1zM222.5 336.3h1v1h-1zM342.2 236.7h1v1h-1zM102.3 410.7h1v1h-1zM222.7 147.7h1v1h-1zM47.9 439.8h1v1h-1zM327.7 410.0h1v1h-1zM632.7 435.4h1v1h-1zM556.4 415.6h1v1h-1zM629.1 360.0h1v1h-1zM92.6 235.6h1v1h-1zM393.0 445.6h1v1h-1zM534.9 315.9h1v1h-1zM509.5 163.0h1v1h-1zM642.7 289.3h1v1h-1zM275.2 209.1h1v1h-1zM668.2 239.4h1v1h-1zM115.3 67.5h1v1h-1zM469.0 253.1h1v1h-1zM618.5 83.7h1v1h-1zM281.0 327.1h1v1h-1zM35.1 45.5h1v1h-1zM372.6 120.0h1v1h-1zM73.8 118.2h1v1h-1zM431.5 236.8h1v1h-1zM54.5 33.6h1v1h-1zM580.3 289.2h1v1h-1zM119.1 387.1h1v1h-1zM15.9 165.9h1v1h-1zM578.2 319.2h1v1h-1zM194.2 400.3h1v1h-1zM408.3 388.7h1v1h-1zM609.0 191.6h1v1h-1zM461.1 244.9h1v1h-1zM644.4 358.6h1v1h-1zM495.3 365.7h1v1h-1zM680.7 115.9h1v1h-1zM138.1 335.6h1v1h-1zM525.6 231.4h1v1h-1zM332.7 181.9h1v1h-1zM602.1 357.7h1v1h-1zM399.1 19.0h1v1h-1zM580.6 206.4h1v1h-1zM130.2 135.1h1v1h-1zM471.8 3.5h1v1h-1zM82.8 136.6h1v1h-1zM605.2 335.6h1v1h-1zM662.1 244.3h1v1h-1zM390.5 248.0h1v1h-1zM359.0 243.8h1v1h-1zM558.4 428.1h1v1h-1zM279.1 283.2h1v1h-1zM210.6 136.3h1v1h-1zM345.8 263.6h1v1h-1zM375.5 438.5h1v1h-1zM112.0 286.2h1v1h-1zM678.3 330.8h1v1h-1zM386.4 166.0h1v1h-1zM274.9 420.6h1v1h-1zM610.7 301.0h1v1h-1zM613.0 415.5h1v1h-1zM577.4 172.8h1v1h-1zM317.2 357.6h1v1h-1zM254.8 336.7h1v1h-1zM328.8 151.8h1v1h-1zM311.6 53.2h1v1h-1zM242.4 187.0h1v1h-1zM13.4 78.1h1v1h-1zM178.2 385.3h1v1h-1zM402.5 129.6h1v1h-1zM680.5 116.5h1v1h-1zM350.9 332.3h1v1h-1zM471.8 195.2h1v1h-1zM530.1 218.6h1v1h-1zM488.2 221.1h1v1h-1zM662.6 321.8h1v1h-1zM63.2 59.0h1v1h-1zM659.2 103.7h1v1h-1zM18.8 114.4h1v1h-1zM327.7 427.6h1v1h-1zM272.8 325.1h1v1h-1zM569.2 40.9h1v1h-1zM417.7 447.1h1v1h-1zM375.3 240.4h1v1h-1zM237.1 424.9h1v1h-1zM661.3 47.2h1v1h-1zM377.5 189.0h1v1h-1zM458.4 54.2h1v1h-1zM181.7 125.9h1v1h-1zM327.7 356.4h1v1h-1zM585.2 353.3h1v1h-1zM461.9 40.1h1v1h-1zM266.4 300.6h1v1h-1zM201.4 228.5h1v1h-1zM617.4 53.0h1v1h-1zM582.5 48.4h1v1h-1zM264.1 406.6h1v1h-1zM138.0 234.3h1v1h-1zM284.7 398.8h1v1h-1zM676.6 130.3h1v1h-1zM336.4 402.0h1v1h-1zM372.0 97.2h1v1h-1zM518.3 152.0h1v1h-1zM331.9 4.8h1v1h-1zM674.5 295.5h1v1h-1zM631.5 435.0h1v1h-1zM183.2 243.2h1v1h-1zM300.8 341.4h1v1h-1zM574.7 103.4h1v1h-1zM188.0 317.4h1v1h-1zM281.3 59.3h1v1h-1zM134.0 252.3h1v1h-1zM408.6 431.1h1v1h-1zM363.8 273.8h1v1h-1zM102.4 186.4h1v1h-1zM191.5 312.5h1v1h-1zM182.9 97.1h1v1h-1zM251.4 211.8h1v1h-1zM231.4 272.4h1v1h-1zM124.4 395.2h1v1h-1zM473.7 240.6h1v1h-1zM40.6 147.1h1v1h-1zM471.0 290.0h1v1h-1zM553.9 400.4h1v1h-1zM215.8 222.2h1v1h-1zM225.8 58.3h1v1h-1zM96.4 115.9h1v1h-1zM60.9 242.4h1v1h-1zM479.7 253.3h1v1h-1zM467.3 102.4h1v1h-1zM136.8 255.3h1v1h-1zM603.2 190.2h1v1h-1zM3.9 10.0h1v1h-1zM208.9 276.7h1v1h-1zM58.6 101.6h1v1h-1zM464.6 442.3h1v1h-1zM233.3 270.3h1v1h-1zM354.1 11.4h1v1h-1zM225.6 63.5h1v1h-1zM171.8 346.0h1v1h-1zM464.9 19.4h1v1h-1zM53.7 325.8h1v1h-1zM71.3 143.0h1v1h-1zM184.4 23.3h1v1h-1zM22.2 63.3h1v1h-1zM272.9 419.3h1v1h-1zM435.7 109.4h1v1h-1zM463.8 123.6h1v1h-1zM351.9 145.2h1v1h-1zM647.0 158.9h1v1h-1zM548.2 288.3h1v1h-1zM575.3 272.6h1v1h-1zM593.7 182.5h1v1h-1zM463.4 279.0h1v1h-1zM360.4 253.9h1v1h-1zM365.9 177.4h1v1h-1zM612.8 284.5h1v1h-1zM375.0 25.2h1v1h-1zM347.3 79.5h1v1h-1zM147.4 195.7h1v1h-1zM372.8 113.2h1v1h-1zM185.5 238.5h1v1h-1zM323.3 181.7h1v1h-1zM71.7 168.3h1v1h-1zM446.7 244.8h1v1h-1zM372.0 379.0h1v1h-1zM493.5 307.7h1v1h-1zM21.7 139.0h1v1h-1zM465.7 70.8h1v1h-1zM623.1 64.6h1v1h-1zM599.7 97.9h1v1h-1zM574.1 381.0h1v1h-1zM229.5 399.1h1v1h-1zM109.8 381.4h1v1h-1zM261.0 198.0h1v1h-1zM81.3 270.3h1v1h-1zM184.7 299.8h1v1h-1zM545.4 271.5h1v1h-1zM6.6 427.6h1v1h-1zM627.3 289.0h1v1h-1zM259.4 252.7h1v1h-1zM602.2 206.9h1v1h-1zM531.6 269.2h1v1h-1zM288.6 419.2h1v1h-1zM279.1 272.4h1v1h-1zM37.3 211.9h1v1h-1zM26.5 316.5h1v1h-1zM1.4 19.8h1v1h-1zM76.7 63.5h1v1h-1zM347.0 160.6h1v1h-1zM185.5 441.7h1v1h-1zM620.0 294.4h1v1h-1zM547.2 368.2h1v1h-1zM168.0 363.1h1v1h-1zM164.3 252.9h1v1h-1zM244.6 72.1h1v1h-1zM530.0 411.5h1v1h-1zM214.6 395.1h1v1h-1zM236.8 295.6h1v1h-1zM679.1 346.9h1v1h-1zM38.9 195.8h1v1h-1zM257.3 132.7h1v1h-1zM556.8 198.6h1v1h-1zM477.2 285.4h1v1h-1zM354.4 26.1h1v1h-1zM459.3 400.3h1v1h-1zM118.3 288.9h1v1h-1zM332.9 153.8h1v1h-1zM484.8 437.9h1v1h-1zM15.8 403.0h1v1h-1zM262.0 374.6h1v1h-1zM120.0 322.0h1v1h-1zM68.9 151.4h1v1h-1zM661.5 295.2h1v1h-1zM535.3 207.7h1v1h-1zM321.9 221.7h1v1h-1zM527.5 325.0h1v1h-1zM133.0 198.4h1v1h-1zM370.1 257.0h1v1h-1zM632.1 377.2h1v1h-1zM103.1 169.5h1v1h-1zM75.2 12.7h1v1h-1zM51.8 83.0h1v1h-1zM522.7 299.9h1v1h-1zM544.4 130.2h1v1h-1zM106.9 436.5h1v1h-1zM563.5 425.2h1v1h-1zM13.8 178.7h1v1h-1zM432.6 330.8h1v1h-1zM622.5 241.9h1v1h-1zM267.1 3.4h1v1h-1zM548.4 441.0h1v1h-1zM618.8 297.7h1v1h-1zM234.2 108.1h1v1h-1zM528.8 420.1h1v1h-1zM655.0 79.7h1v1h-1zM399.6 230.9h1v1h-1zM292.1 356.9h1v1h-1zM638.3 325.6h1v1h-1zM477.9 310.4h1v1h-1zM446.1 241.5h1v1h-1zM169.8 350.2h1v1h-1zM82.1 289.5h1v1h-1zM264.5 251.9h1v1h-1zM437.8 215.6h1v1h-1zM667.1 108.2h1v1h-1zM9.3 429.0h1v1h-1zM213.5 125.6h1v1h-1zM284.0 267.5h1v1h-1zM672.5 318.0h1v1h-1zM217.8 240.5h1v1h-1zM306.6 225.7h1v1h-1zM285.4 76.1h1v1h-1zM270.3 175.3h1v1h-1zM137.7 367.0h1v1h-1zM246.2 68.9h1v1h-1zM387.0 379.5h1v1h-1zM532.6 279.7h1v1h-1zM498.8 151.6h1v1h-1zM98.2 115.2h1v1h-1zM238.9 126.1h1v1h-1zM319.5 67.8h1v1h-1zM89.7 114.2h1v1h-1zM134.8 360.2h1v1h-1zM367.1 89.9h1v1h-1zM293.3 391.6h1v1h-1zM394.4 249.2h1v1h-1zM267.5 88.7h1v1h-1zM426.9 35.6h1v1h-1zM536.4 26.8h1v1h-1zM509.3 172.4h1v1h-1zM465.7 265.8h1v1h-1zM89.0 242.2h1v1h-1zM51.5 109.1h1v1h-1zM260.9 129.0h1v1h-1zM451.7 443.1h1v1h-1zM244.0 376.7h1v1h-1zM154.3 318.8h1v1h-1zM237.8 240.8h1v1h-1zM61.3 371.7h1v1h-1zM143.2 208.6h1v1h-1zM198.7 364.0h1v1h-1zM404.6 276.6h1v1h-1zM515.0 115.2h1v1h-1zM40.7 372.2h1v1h-1zM215.9 364.9h1v1h-1zM652.5 282.9h1v1h-1zM71.3 383.6h1v1h-1zM432.4 111.2h1v1h-1zM142.6 228.5h1v1h-1zM83.8 406.9h1v1h-1zM483.1 368.0h1v1h-1zM262.4 414.6h1v1h-1zM92.2 321.9h1v1h-1zM174.4 2.6h1v1h-1zM83.3 91.3h1v1h-1zM520.8 170.4h1v1h-1zM329.3 275.9h1v1h-1zM183.3 287.0h1v1h-1zM458.3 413.8h1v1h-1zM343.5 384.2h1v1h-1zM660.0 345.5h1v1h-1zM287.8 122.8h1v1h-1zM67.6 373.3h1v1h-1zM89.3 251.7h1v1h-1zM310.1 21.1h1v1h-1zM147.0 369.7h1v1h-1zM367.8 415.1h1v1h-1zM619.3 43.1h1v1h-1zM462.8 20.1h1v1h-1zM288.8 198.9h1v1h-1zM652.6 267.7h1v1h-1zM130.4 229.4h1v1h-1zM356.4 89.3h1v1h-1zM246.0 394.1h1v1h-1zM669.4 349.0h1v1h-1zM44.9 406.8h1v1h-1zM313.2 374.7h1v1h-1zM121.4 67.2h1v1h-1zM618.4 128.9h1v1h-1zM30.3 225.5h1v1h-1zM675.6 375.3h1v1h-1zM270.9 445.9h1v1h-1zM543.5 378.2h1v1h-1zM441.0 177.7h1v1h-1zM617.8 211.8h1v1h-1zM637.5 248.4h1v1h-1zM620.6 214.8h1v1h-1zM291.7 264.7h1v1h-1zM217.1 67.9h1v1h-1zM402.3 382.2h1v1h-1zM190.2 388.5h1v1h-1zM537.0 348.5h1v1h-1zM283.7 448.4h1v1h-1zM539.6 258.9h1v1h-1zM78.3 258.1h1v1h-1zM10.8 405.2h1v1h-1zM230.3 166.0h1v1h-1zM376.2 286.6h1v1h-1zM397.8 218.2h1v1h-1zM433.0 380.5h1v1h-1zM304.9 225.0h1v1h-1zM552.8 2.5h1v1h-1zM110.4 146.6h1v1h-1zM146.7 402.4h1v1h-1zM101.9 49.3h1v1h-1zM217.0 228.9h1v1h-1zM560.4 447.1h1v1h-1zM581.1 273.8h1v1h-1zM26.6 29.4h1v1h-1zM430.5 368.3h1v1h-1zM181.8 435.2h1v1h-1zM375.8 258.0h1v1h-1zM422.3 34.6h1v1h-1zM117.0 420.4h1v1h-1zM183.0 38.3h1v1h-1zM193.3 326.3h1v1h-1zM180.0 95.3h1v1h-1zM189.7 216.2h1v1h-1zM503.3 136.0h1v1h-1zM595.9 438.2h1v1h-1zM560.8 34.7h1v1h-1zM215.8 415.8h1v1h-1zM586.2 60.7h1v1h-1zM302.2 164.0h1v1h-1zM510.0 13.9h1v1h-1zM215.8 336.9h1v1h-1zM605.0 19.2h1v1h-1zM401.7 298.3h1v1h-1zM595.5 191.2h1v1h-1zM663.6 89.4h1v1h-1zM79.2 59.3h1v1h-1zM400.6 55.9h1v1h-1zM182.6 88.9h1v1h-1zM38.7 432.1h1v1h-1zM229.1 432.9h1v1h-1zM493.5 99.5h1v1h-1zM636.1 5.2h1v1h-1zM669.5 15.5h1v1h-1zM173.5 248.3h1v1h-1zM7.3 343.6h1v1h-1zM58.6 367.1h1v1h-1zM24.9 237.6h1v1h-1zM143.6 130.4h1v1h-1zM335.0 167.4h1v1h-1zM267.9 293.7h1v1h-1zM134.0 82.3h1v1h-1zM467.1 134.0h1v1h-1zM636.3 192.0h1v1h-1zM323.8 11.4h1v1h-1zM15.1 47.9h1v1h-1zM427.1 298.7h1v1h-1zM649.4 194.7h1v1h-1zM482.9 154.9h1v1h-1zM51.4 189.2h1v1h-1zM478.8 361.3h1v1h-1zM649.3 373.8h1v1h-1zM384.8 247.6h1v1h-1zM342.2 215.0h1v1h-1zM464.4 258.9h1v1h-1zM584.7 202.6h1v1h-1zM321.9 373.8h1v1h-1zM461.1 236.0h1v1h-1zM384.7 362.0h1v1h-1zM414.6 117.1h1v1h-1zM212.3 271.9h1v1h-1zM32.2 206.0h1v1h-1zM608.4 105.0h1v1h-1zM303.5 314.4h1v1h-1zM631.3 312.9h1v1h-1zM427.2 173.0h1v1h-1zM298.8 288.6h1v1h-1zM243.7 352.6h1v1h-1zM6.6 337.6h1v1h-1zM506.3 138.3h1v1h-1zM11.2 152.5h1v1h-1zM402.2 353.6h1v1h-1zM593.7 94.4h1v1h-1zM56.7 54.7h1v1h-1zM674.5 290.2h1v1h-1zM88.4 310.5h1v1h-1zM654.4 273.1h1v1h-1zM159.4 432.2h1v1h-1zM478.1 83.0h1v1h-1zM522.8 226.9h1v1h-1zM391.9 164.9h1v1h-1zM201.0 189.4h1v1h-1zM359.5 207.7h1v1h-1zM590.9 34.2h1v1h-1zM136.5 421.0h1v1h-1zM415.0 277.7h1v1h-1zM429.9 110.1h1v1h-1zM269.8 95.1h1v1h-1zM104.5 444.3h1v1h-1zM507.5 394.9h1v1h-1zM2.0 316.6h1v1h-1zM210.2 224.1h1v1h-1zM460.8 15.0h1v1h-1zM253.5 249.1h1v1h-1zM596.5 230.9h1v1h-1zM217.3 271.5h1v1h-1zM398.4 131.9h1v1h-1zM374.2 124.7h1v1h-1zM8.7 140.2h1v1h-1zM59.9 221.4h1v1h-1zM342.3 390.9h1v1h-1zM510.3 336.7h1v1h-1zM674.9 119.6h1v1h-1zM254.8 104.3h1v1h-1zM70.8 231.8h1v1h-1zM349.2 59.1h1v1h-1zM629.3 439.4h1v1h-1zM47.5 2.4h1v1h-1zM43.1 328.8h1v1h-1zM581.6 30.6h1v1h-1zM7.1 242.0h1v1h-1zM227.6 9.4h1v1h-1zM7.0 95.7h1v1h-1zM137.3 133.3h1v1h-1zM376.0 113.6h1v1h-1zM160.0 95.4h1v1h-1zM605.0 107.9h1v1h-1zM379.2 203.8h1v1h-1zM226.7 183.2h1v1h-1zM11.9 83.9h1v1h-1zM436.9 342.1h1v1h-1zM149.7 80.1h1v1h-1zM617.8 44.8h1v1h-1zM542.3 394.4h1v1h-1zM100.6 374.2h1v1h-1zM103.2 20.3h1v1h-1zM195.9 155.3h1v1h-1zM402.5 199.2h1v1h-1zM541.3 298.8h1v1h-1zM82.2 91.7h1v1h-1zM509.1 52.9h1v1h-1zM649.7 364.6h1v1h-1zM150.7 129.2h1v1h-1zM172.7 190.4h1v1h-1zM170.3 15.5h1v1h-1zM172.5 88.3h1v1h-1zM239.3 204.5h1v1h-1zM596.4 296.5h1v1h-1zM420.1 388.3h1v1h-1zM264.2 191.9h1v1h-1zM167.5 372.9h1v1h-1zM598.5 409.1h1v1h-1zM413.0 52.0h1v1h-1zM50.2 358.3h1v1h-1zM604.0 239.5h1v1h-1zM628.0 418.0h1v1h-1zM515.0 167.0h1v1h-1zM311.8 158.6h1v1h-1zM270.7 212.1h1v1h-1zM12.7 58.1h1v1h-1zM115.4 254.9h1v1h-1zM594.6 319.7h1v1h-1zM102.8 206.0h1v1h-1zM428.2 61.6h1v1h-1zM55.3 275.2h1v1h-1zM161.3 290.0h1v1h-1zM117.8 384.4h1v1h-1zM211.9 192.9h1v1h-1zM375.5 398.1h1v1h-1zM625.1 379.5h1v1h-1zM467.2 32.0h1v1h-1zM128.2 240.5h1v1h-1zM671.9 326.3h1v1h-1zM131.5 160.5h1v1h-1zM656.4 228.5h1v1h-1zM593.7 385.4h1v1h-1zM533.4 281.9h1v1h-1zM454.4 154.3h1v1h-1zM83.0 426.0h1v1h-1zM23.2 122.4h1v1h-1zM419.1 433.3h1v1h-1zM144.1 111.6h1v1h-1zM578.4 147.5h1v1h-1zM275.4 162.2h1v1h-1zM34.7 422.9h1v1h-1zM476.2 4.1h1v1h-1zM67.2 61.7h1v1h-1zM252.2 399.9h1v1h-1zM96.9 103.2h1v1h-1zM213.1 229.8h1v1h-1zM614.6 242.7h1v1h-1zM616.3 243.8h1v1h-1zM295.3 391.4h1v1h-1zM396.5 213.8h1v1h-1zM350.0 160.3h1v1h-1zM295.9 34.2h1v1h-1zM140.8 342.8h1v1h-1zM92.0 94.3h1v1h-1zM112.4 163.6h1v1h-1zM34.6 162.4h1v1h-1zM416.2 304.7h1v1h-1zM591.7 40.0h1v1h-1zM439.4 88.9h1v1h-1zM234.2 258.7h1v1h-1zM571.6 301.4h1v1h-1zM672.0 9.0h1v1h-1zM216.3 216.2h1v1h-1zM25.7 24.5h1v1h-1zM250.8 251.5h1v1h-1zM93.3 31.6h1v1h-1zM218.1 333.2h1v1h-1zM387.2 447.6h1v1h-1zM413.1 399.9h1v1h-1zM391.1 216.5h1v1h-1zM284.0 33.0h1v1h-1zM43.9 296.0h1v1h-1zM586.1 9.5h1v1h-1zM123.7 147.7h1v1h-1zM214.2 374.7h1v1h-1zM172.9 138.2h1v1h-1zM333.0 427.0h1v1h-1zM201.6 284.9h1v1h-1zM34.1 194.3h1v1h-1zM632.4 98.4h1v1h-1zM243.8 294.1h1v1h-1zM386.1 259.1h1v1h-1zM415.4 303.6h1v1h-1zM220.7 158.6h1v1h-1zM271.4 235.0h1v1h-1zM387.1 392.5h1v1h-1zM270.6 202.3h1v1h-1zM568.0 436.0h1v1h-1zM166.4 328.2h1v1h-1zM169.6 333.0h1v1h-1zM27.2 228.2h1v1h-1zM389.2 314.4h1v1h-1zM625.5 357.2h1v1h-1zM384.5 223.7h1v1h-1zM10.0 248.6h1v1h-1zM383.9 333.5h1v1h-1zM113.6 264.7h1v1h-1zM36.1 326.2h1v1h-1zM560.5 197.1h1v1h-1zM469.3 297.7h1v1h-1zM207.8 40.5h1v1h-1zM517.2 161.0h1v1h-1zM110.9 199.1h1v1h-1zM568.2 428.5h1v1h-1zM387.4 435.5h1v1h-1zM119.1 220.7h1v1h-1zM6.7 105.8h1v1h-1zM597.9 27.6h1v1h-1zM446.7 229.3h1v1h-1zM673.5 446.1h1v1h-1zM85.0 118.4h1v1h-1zM676.2 148.8h1v1h-1zM123.9 409.5h1v1h-1zM421.3 139.1h1v1h-1zM378.5 192.5h1v1h-1zM312.9 248.4h1v1h-1zM116.6 276.8h1v1h-1zM651.5 266.2h1v1h-1zM537.3 127.6h1v1h-1zM106.3 3.9h1v1h-1zM669.3 54.3h1v1h-1zM259.8 294.3h1v1h-1zM501.3 277.9h1v1h-1zM300.3 366.1h1v1h-1zM302.2 375.2h1v1h-1zM37.8 324.5h1v1h-1zM67.3 174.6h1v1h-1zM302.9 82.5h1v1h-1zM306.7 383.1h1v1h-1zM25.8 87.9h1v1h-1zM665.4 202.6h1v1h-1zM266.4 409.9h1v1h-1zM529.4 78.7h1v1h-1zM408.2 81.8h1v1h-1zM529.3 250.3h1v1h-1zM544.8 30.1h1v1h-1zM633.0 104.0h1v1h-1zM579.7 198.8h1v1h-1zM606.3 46.5h1v1h-1zM37.6 210.8h1v1h-1zM634.6 209.5h1v1h-1zM346.6 74.6h1v1h-1zM369.4 192.4h1v1h-1zM605.7 332.9h1v1h-1zM326.4 67.7h1v1h-1zM100.4 436.1h1v1h-1zM417.1 101.8h1v1h-1zM553.3 97.8h1v1h-1zM310.2 394.0h1v1h-1zM71.4 47.1h1v1h-1zM36.8 69.0h1v1h-1zM256.1 145.1h1v1h-1zM191.8 7.3h1v1h-1zM332.7 200.5h1v1h-1zM505.5 136.8h1v1h-1zM396.8 141.3h1v1h-1zM513.8 79.0h1v1h-1zM334.2 200.7h1v1h-1zM313.4 242.1h1v1h-1zM366.1 142.7h1v1h-1zM562.2 427.3h1v1h-1zM381.7 285.7h1v1h-1zM493.8 144.3h1v1h-1zM404.3 208.2h1v1h-1zM330.9 177.6h1v1h-1zM366.2 98.7h1v1h-1zM165.1 90.7h1v1h-1zM405.8 110.9h1v1h-1zM532.6 406.6h1v1h-1zM518.4 148.1h1v1h-1zM642.9 155.2h1v1h-1zM247.2 267.7h1v1h-1zM450.9 184.2h1v1h-1zM536.7 383.4h1v1h-1zM197.5 101.6h1v1h-1zM271.7 314.0h1v1h-1zM457.1 79.7h1v1h-1zM265.7 405.0h1v1h-1zM654.7 271.7h1v1h-1zM532.3 377.2h1v1h-1zM152.3 30.5h1v1h-1zM417.3 173.3h1v1h-1zM485.0 132.6h1v1h-1zM296.5 363.1h1v1h-1zM64.5 183.7h1v1h-1zM105.4 240.1h1v1h-1zM500.0 443.3h1v1h-1zM514.1 65.6h1v1h-1zM298.6 243.9h1v1h-1zM435.3 315.0h1v1h-1zM663.8 423.1h1v1h-1zM143.0 72.0h1v1h-1zM661.6 72.9h1v1h-1zM660.4 54.7h1v1h-1zM399.4 59.2h1v1h-1zM92.1 150.6h1v1h-1zM541.5 315.6h1v1h-1zM217.1 62.4h1v1h-1zM245.2 79.0h1v1h-1zM161.0 223.6h1v1h-1zM333.8 414.3h1v1h-1zM62.1 239.7h1v1h-1zM385.6 65.0h1v1h-1zM246.5 62.8h1v1h-1zM609.6 157.1h1v1h-1zM45.2 213.9h1v1h-1zM361.3 398.5h1v1h-1zM490.7 93.3h1v1h-1zM619.6 3.3h1v1h-1zM475.8 19.9h1v1h-1zM559.2 85.9h1v1h-1zM544.0 365.4h1v1h-1zM526.4 50.3h1v1h-1zM273.6 47.9h1v1h-1zM490.4 446.3h1v1h-1zM357.0 293.1h1v1h-1zM455.3 64.9h1v1h-1zM254.0 157.3h1v1h-1zM512.2 185.3h1v1h-1zM251.6 247.0h1v1h-1zM141.2 30.3h1v1h-1zM163.1 10.3h1v1h-1zM456.9 205.6h1v1h-1zM420.9 255.4h1v1h-1zM37.9 366.2h1v1h-1zM558.7 4.4h1v1h-1zM294.0 353.0h1v1h-1zM283.9 386.2h1v1h-1zM474.4 297.0h1v1h-1zM617.8 350.0h1v1h-1zM399.4 22.2h1v1h-1z" fill="#5b6164"/><path d="M652.1 425.6h1.1v1.1h-1.1zM39.5 39.0h1.1v1.1h-1.1zM570.0 330.7h1.1v1.1h-1.1zM457.1 139.0h1.1v1.1h-1.1zM413.6 272.8h1.1v1.1h-1.1zM396.8 72.0h1.1v1.1h-1.1zM294.3 177.3h1.1v1.1h-1.1zM493.4 446.7h1.1v1.1h-1.1zM647.5 244.8h1.1v1.1h-1.1zM303.9 121.2h1.1v1.1h-1.1zM25.5 13.3h1.1v1.1h-1.1zM317.6 143.7h1.1v1.1h-1.1zM259.8 400.5h1.1v1.1h-1.1zM359.0 252.1h1.1v1.1h-1.1zM161.8 11.7h1.1v1.1h-1.1zM222.4 62.2h1.1v1.1h-1.1zM348.5 448.4h1.1v1.1h-1.1zM460.3 82.5h1.1v1.1h-1.1zM609.5 357.9h1.1v1.1h-1.1zM501.1 407.2h1.1v1.1h-1.1zM520.5 354.8h1.1v1.1h-1.1zM241.9 440.5h1.1v1.1h-1.1zM656.1 73.2h1.1v1.1h-1.1zM514.5 321.4h1.1v1.1h-1.1zM315.2 238.6h1.1v1.1h-1.1zM334.7 415.3h1.1v1.1h-1.1zM342.1 373.5h1.1v1.1h-1.1zM242.0 396.5h1.1v1.1h-1.1zM613.7 207.5h1.1v1.1h-1.1zM387.6 413.3h1.1v1.1h-1.1zM493.9 219.0h1.1v1.1h-1.1zM152.1 146.5h1.1v1.1h-1.1zM477.4 75.4h1.1v1.1h-1.1zM619.3 121.1h1.1v1.1h-1.1zM621.6 139.7h1.1v1.1h-1.1zM653.0 317.4h1.1v1.1h-1.1zM344.4 233.0h1.1v1.1h-1.1zM444.6 264.4h1.1v1.1h-1.1zM213.4 94.1h1.1v1.1h-1.1zM349.6 419.5h1.1v1.1h-1.1zM425.4 34.8h1.1v1.1h-1.1zM559.7 326.2h1.1v1.1h-1.1zM619.1 86.7h1.1v1.1h-1.1zM508.2 27.3h1.1v1.1h-1.1zM445.6 123.3h1.1v1.1h-1.1zM155.3 393.2h1.1v1.1h-1.1zM73.4 235.0h1.1v1.1h-1.1zM582.5 110.7h1.1v1.1h-1.1zM144.3 395.5h1.1v1.1h-1.1zM289.0 322.2h1.1v1.1h-1.1zM22.7 163.3h1.1v1.1h-1.1zM118.1 302.4h1.1v1.1h-1.1zM57.5 428.6h1.1v1.1h-1.1zM18.3 327.8h1.1v1.1h-1.1zM15.4 115.5h1.1v1.1h-1.1zM554.9 71.4h1.1v1.1h-1.1zM126.1 310.8h1.1v1.1h-1.1zM263.6 20.3h1.1v1.1h-1.1zM675.2 68.8h1.1v1.1h-1.1zM25.7 155.2h1.1v1.1h-1.1zM420.0 333.6h1.1v1.1h-1.1zM78.0 152.1h1.1v1.1h-1.1zM22.0 202.0h1.1v1.1h-1.1zM522.6 332.5h1.1v1.1h-1.1zM615.3 339.5h1.1v1.1h-1.1zM588.3 317.0h1.1v1.1h-1.1zM323.0 102.0h1.1v1.1h-1.1zM451.0 142.7h1.1v1.1h-1.1zM70.5 201.6h1.1v1.1h-1.1zM596.7 58.1h1.1v1.1h-1.1zM399.4 177.0h1.1v1.1h-1.1zM351.6 65.4h1.1v1.1h-1.1zM654.6 117.1h1.1v1.1h-1.1zM413.7 189.1h1.1v1.1h-1.1zM13.3 251.0h1.1v1.1h-1.1zM96.7 26.4h1.1v1.1h-1.1zM23.9 73.2h1.1v1.1h-1.1zM66.3 285.5h1.1v1.1h-1.1zM347.1 441.6h1.1v1.1h-1.1zM637.1 446.5h1.1v1.1h-1.1zM159.3 200.2h1.1v1.1h-1.1zM171.8 265.9h1.1v1.1h-1.1zM426.1 359.5h1.1v1.1h-1.1zM484.2 116.0h1.1v1.1h-1.1zM289.1 236.7h1.1v1.1h-1.1zM4.3 16.9h1.1v1.1h-1.1zM279.3 50.8h1.1v1.1h-1.1zM493.9 108.9h1.1v1.1h-1.1zM68.9 82.4h1.1v1.1h-1.1zM158.7 98.4h1.1v1.1h-1.1zM355.6 209.1h1.1v1.1h-1.1zM211.9 288.5h1.1v1.1h-1.1zM145.7 407.1h1.1v1.1h-1.1zM656.9 327.6h1.1v1.1h-1.1zM296.4 230.2h1.1v1.1h-1.1zM396.7 24.0h1.1v1.1h-1.1zM285.7 236.2h1.1v1.1h-1.1zM124.4 43.0h1.1v1.1h-1.1zM547.6 165.1h1.1v1.1h-1.1zM354.6 413.8h1.1v1.1h-1.1zM416.8 130.7h1.1v1.1h-1.1zM670.8 167.8h1.1v1.1h-1.1zM14.0 308.0h1.1v1.1h-1.1zM69.9 138.1h1.1v1.1h-1.1zM573.5 302.3h1.1v1.1h-1.1zM11.7 203.2h1.1v1.1h-1.1zM280.7 218.7h1.1v1.1h-1.1zM142.8 264.8h1.1v1.1h-1.1zM51.3 128.4h1.1v1.1h-1.1zM254.9 420.0h1.1v1.1h-1.1zM53.1 339.2h1.1v1.1h-1.1zM132.0 257.1h1.1v1.1h-1.1zM267.8 208.5h1.1v1.1h-1.1zM514.2 178.0h1.1v1.1h-1.1zM83.9 55.6h1.1v1.1h-1.1zM55.8 381.8h1.1v1.1h-1.1zM437.5 430.9h1.1v1.1h-1.1zM472.7 12.1h1.1v1.1h-1.1zM449.9 349.2h1.1v1.1h-1.1zM493.7 224.1h1.1v1.1h-1.1zM244.5 205.8h1.1v1.1h-1.1zM544.9 121.5h1.1v1.1h-1.1zM359.4 214.9h1.1v1.1h-1.1zM651.1 361.3h1.1v1.1h-1.1zM635.7 375.5h1.1v1.1h-1.1zM203.1 104.8h1.1v1.1h-1.1zM333.9 117.2h1.1v1.1h-1.1zM292.2 305.3h1.1v1.1h-1.1zM626.6 263.5h1.1v1.1h-1.1zM558.0 44.0h1.1v1.1h-1.1zM243.5 448.0h1.1v1.1h-1.1zM100.8 187.7h1.1v1.1h-1.1zM46.5 39.6h1.1v1.1h-1.1zM610.8 443.9h1.1v1.1h-1.1zM442.3 58.6h1.1v1.1h-1.1zM202.8 104.8h1.1v1.1h-1.1zM457.8 306.1h1.1v1.1h-1.1zM299.9 235.7h1.1v1.1h-1.1zM77.3 243.3h1.1v1.1h-1.1zM647.9 339.6h1.1v1.1h-1.1zM66.5 232.4h1.1v1.1h-1.1zM488.2 116.3h1.1v1.1h-1.1zM610.4 207.5h1.1v1.1h-1.1zM479.9 182.1h1.1v1.1h-1.1zM678.7 351.7h1.1v1.1h-1.1zM391.5 65.9h1.1v1.1h-1.1zM301.4 14.2h1.1v1.1h-1.1zM406.3 396.1h1.1v1.1h-1.1zM123.9 229.6h1.1v1.1h-1.1zM329.6 182.4h1.1v1.1h-1.1zM484.8 420.6h1.1v1.1h-1.1zM481.4 212.7h1.1v1.1h-1.1zM656.1 149.2h1.1v1.1h-1.1zM508.8 296.0h1.1v1.1h-1.1zM519.7 382.7h1.1v1.1h-1.1zM154.2 279.3h1.1v1.1h-1.1zM275.3 299.8h1.1v1.1h-1.1zM666.5 285.4h1.1v1.1h-1.1zM8.9 209.1h1.1v1.1h-1.1zM485.6 396.7h1.1v1.1h-1.1zM443.7 366.6h1.1v1.1h-1.1zM12.7 423.6h1.1v1.1h-1.1zM497.8 272.7h1.1v1.1h-1.1zM617.5 397.3h1.1v1.1h-1.1zM69.4 366.4h1.1v1.1h-1.1zM523.3 90.4h1.1v1.1h-1.1zM507.8 263.6h1.1v1.1h-1.1zM131.4 361.3h1.1v1.1h-1.1zM94.9 275.3h1.1v1.1h-1.1zM296.8 114.7h1.1v1.1h-1.1zM386.5 210.3h1.1v1.1h-1.1zM140.6 434.1h1.1v1.1h-1.1zM50.6 2.4h1.1v1.1h-1.1zM331.6 376.1h1.1v1.1h-1.1zM449.4 339.1h1.1v1.1h-1.1zM331.3 303.3h1.1v1.1h-1.1zM229.1 120.6h1.1v1.1h-1.1zM343.5 13.3h1.1v1.1h-1.1zM55.3 338.8h1.1v1.1h-1.1zM119.3 337.1h1.1v1.1h-1.1zM535.2 182.2h1.1v1.1h-1.1zM460.7 353.8h1.1v1.1h-1.1zM589.4 61.4h1.1v1.1h-1.1zM111.7 172.0h1.1v1.1h-1.1zM317.4 133.1h1.1v1.1h-1.1zM8.1 250.7h1.1v1.1h-1.1zM659.5 165.2h1.1v1.1h-1.1zM367.4 172.3h1.1v1.1h-1.1zM302.5 391.0h1.1v1.1h-1.1zM211.0 291.8h1.1v1.1h-1.1zM330.5 242.3h1.1v1.1h-1.1zM623.9 35.4h1.1v1.1h-1.1zM562.4 137.3h1.1v1.1h-1.1zM441.1 357.5h1.1v1.1h-1.1zM446.0 177.0h1.1v1.1h-1.1zM573.5 42.6h1.1v1.1h-1.1zM432.3 176.2h1.1v1.1h-1.1zM362.2 382.2h1.1v1.1h-1.1zM544.3 282.7h1.1v1.1h-1.1zM210.8 105.3h1.1v1.1h-1.1zM312.6 105.0h1.1v1.1h-1.1zM190.0 430.1h1.1v1.1h-1.1zM77.2 367.7h1.1v1.1h-1.1zM259.2 164.3h1.1v1.1h-1.1zM217.8 35.7h1.1v1.1h-1.1zM312.5 75.6h1.1v1.1h-1.1zM302.0 131.8h1.1v1.1h-1.1zM610.2 413.9h1.1v1.1h-1.1zM302.0 287.5h1.1v1.1h-1.1zM634.1 147.1h1.1v1.1h-1.1zM68.8 107.6h1.1v1.1h-1.1zM130.1 305.0h1.1v1.1h-1.1zM255.5 160.5h1.1v1.1h-1.1zM542.5 105.5h1.1v1.1h-1.1zM551.6 284.5h1.1v1.1h-1.1zM273.6 369.9h1.1v1.1h-1.1zM234.1 394.6h1.1v1.1h-1.1zM631.6 226.2h1.1v1.1h-1.1zM470.9 426.1h1.1v1.1h-1.1zM506.7 337.5h1.1v1.1h-1.1zM593.0 420.1h1.1v1.1h-1.1zM514.2 439.6h1.1v1.1h-1.1zM199.6 279.9h1.1v1.1h-1.1zM457.7 165.6h1.1v1.1h-1.1zM270.1 79.3h1.1v1.1h-1.1zM653.2 159.6h1.1v1.1h-1.1zM325.6 401.3h1.1v1.1h-1.1zM128.0 431.4h1.1v1.1h-1.1zM87.5 13.6h1.1v1.1h-1.1zM239.9 161.9h1.1v1.1h-1.1zM625.9 396.7h1.1v1.1h-1.1zM519.6 196.5h1.1v1.1h-1.1zM370.6 107.1h1.1v1.1h-1.1zM568.6 175.7h1.1v1.1h-1.1zM194.8 286.7h1.1v1.1h-1.1zM103.5 142.7h1.1v1.1h-1.1zM631.7 43.6h1.1v1.1h-1.1zM97.8 92.5h1.1v1.1h-1.1zM171.9 189.3h1.1v1.1h-1.1zM171.4 154.5h1.1v1.1h-1.1zM168.9 108.6h1.1v1.1h-1.1zM416.8 151.7h1.1v1.1h-1.1zM254.9 345.0h1.1v1.1h-1.1zM43.0 65.5h1.1v1.1h-1.1zM580.4 193.5h1.1v1.1h-1.1zM531.4 60.5h1.1v1.1h-1.1zM357.2 379.7h1.1v1.1h-1.1zM231.2 345.1h1.1v1.1h-1.1zM416.7 177.8h1.1v1.1h-1.1zM680.2 176.8h1.1v1.1h-1.1zM323.7 278.5h1.1v1.1h-1.1zM216.8 376.3h1.1v1.1h-1.1zM407.9 264.4h1.1v1.1h-1.1zM367.8 442.3h1.1v1.1h-1.1zM674.5 377.7h1.1v1.1h-1.1zM310.6 185.5h1.1v1.1h-1.1zM358.4 21.7h1.1v1.1h-1.1zM74.7 446.9h1.1v1.1h-1.1zM88.3 420.9h1.1v1.1h-1.1zM463.9 411.0h1.1v1.1h-1.1zM53.7 138.0h1.1v1.1h-1.1zM544.4 5.0h1.1v1.1h-1.1zM73.2 158.1h1.1v1.1h-1.1zM118.9 66.8h1.1v1.1h-1.1zM457.1 42.2h1.1v1.1h-1.1zM662.6 291.9h1.1v1.1h-1.1zM34.9 403.6h1.1v1.1h-1.1zM165.5 216.7h1.1v1.1h-1.1zM381.5 63.1h1.1v1.1h-1.1zM343.0 28.0h1.1v1.1h-1.1zM136.9 412.5h1.1v1.1h-1.1zM560.8 235.3h1.1v1.1h-1.1zM465.3 393.2h1.1v1.1h-1.1zM96.3 221.5h1.1v1.1h-1.1zM90.7 53.2h1.1v1.1h-1.1zM74.7 95.9h1.1v1.1h-1.1zM37.2 97.4h1.1v1.1h-1.1zM259.2 280.0h1.1v1.1h-1.1zM585.7 406.1h1.1v1.1h-1.1zM489.7 228.2h1.1v1.1h-1.1zM625.5 74.0h1.1v1.1h-1.1zM72.8 367.4h1.1v1.1h-1.1zM428.1 95.2h1.1v1.1h-1.1zM257.9 134.2h1.1v1.1h-1.1zM294.4 192.6h1.1v1.1h-1.1zM272.1 358.4h1.1v1.1h-1.1zM553.6 253.0h1.1v1.1h-1.1zM323.0 128.4h1.1v1.1h-1.1zM522.2 443.1h1.1v1.1h-1.1zM157.0 316.0h1.1v1.1h-1.1zM477.1 295.9h1.1v1.1h-1.1zM21.8 248.2h1.1v1.1h-1.1zM138.6 88.1h1.1v1.1h-1.1zM395.8 290.0h1.1v1.1h-1.1zM426.9 333.5h1.1v1.1h-1.1zM479.5 213.9h1.1v1.1h-1.1zM33.5 347.0h1.1v1.1h-1.1zM561.5 375.3h1.1v1.1h-1.1zM408.3 18.1h1.1v1.1h-1.1zM134.4 49.5h1.1v1.1h-1.1zM434.0 244.8h1.1v1.1h-1.1zM128.0 429.2h1.1v1.1h-1.1zM667.0 403.9h1.1v1.1h-1.1zM316.9 131.7h1.1v1.1h-1.1zM143.2 370.2h1.1v1.1h-1.1zM478.3 125.2h1.1v1.1h-1.1zM615.6 255.9h1.1v1.1h-1.1zM282.0 187.1h1.1v1.1h-1.1zM491.6 205.0h1.1v1.1h-1.1zM450.0 55.7h1.1v1.1h-1.1zM479.3 123.0h1.1v1.1h-1.1zM621.0 97.0h1.1v1.1h-1.1zM227.9 242.0h1.1v1.1h-1.1zM268.2 236.4h1.1v1.1h-1.1zM630.1 91.1h1.1v1.1h-1.1zM526.9 311.6h1.1v1.1h-1.1zM536.4 201.6h1.1v1.1h-1.1zM310.5 155.9h1.1v1.1h-1.1zM323.3 115.1h1.1v1.1h-1.1zM131.0 214.3h1.1v1.1h-1.1zM131.8 211.3h1.1v1.1h-1.1zM391.4 139.6h1.1v1.1h-1.1zM117.1 272.1h1.1v1.1h-1.1zM586.8 100.6h1.1v1.1h-1.1zM420.3 296.1h1.1v1.1h-1.1zM603.6 306.6h1.1v1.1h-1.1zM210.6 93.9h1.1v1.1h-1.1zM570.9 135.0h1.1v1.1h-1.1zM9.6 391.0h1.1v1.1h-1.1zM135.8 141.3h1.1v1.1h-1.1zM218.2 115.6h1.1v1.1h-1.1zM494.1 154.6h1.1v1.1h-1.1zM301.0 188.9h1.1v1.1h-1.1zM568.6 9.2h1.1v1.1h-1.1zM395.8 60.1h1.1v1.1h-1.1zM103.5 272.9h1.1v1.1h-1.1zM256.9 30.1h1.1v1.1h-1.1zM401.6 410.6h1.1v1.1h-1.1zM440.3 223.0h1.1v1.1h-1.1zM546.3 411.3h1.1v1.1h-1.1zM104.0 135.1h1.1v1.1h-1.1zM658.0 415.8h1.1v1.1h-1.1zM139.2 316.2h1.1v1.1h-1.1zM596.4 265.9h1.1v1.1h-1.1zM479.2 235.7h1.1v1.1h-1.1zM160.8 96.5h1.1v1.1h-1.1zM43.2 299.2h1.1v1.1h-1.1zM95.2 279.4h1.1v1.1h-1.1zM267.4 196.4h1.1v1.1h-1.1zM661.9 176.5h1.1v1.1h-1.1zM324.3 171.2h1.1v1.1h-1.1zM147.5 101.4h1.1v1.1h-1.1zM363.7 367.2h1.1v1.1h-1.1zM62.6 424.6h1.1v1.1h-1.1zM460.3 25.1h1.1v1.1h-1.1zM482.5 180.9h1.1v1.1h-1.1zM351.5 46.2h1.1v1.1h-1.1zM348.5 233.9h1.1v1.1h-1.1zM533.9 261.2h1.1v1.1h-1.1zM481.0 330.1h1.1v1.1h-1.1zM151.6 12.1h1.1v1.1h-1.1zM326.9 58.9h1.1v1.1h-1.1zM97.6 145.1h1.1v1.1h-1.1zM367.2 276.9h1.1v1.1h-1.1zM441.2 423.3h1.1v1.1h-1.1zM70.5 251.0h1.1v1.1h-1.1zM60.0 301.2h1.1v1.1h-1.1zM298.9 63.8h1.1v1.1h-1.1zM212.5 296.9h1.1v1.1h-1.1zM323.3 424.1h1.1v1.1h-1.1zM242.9 153.4h1.1v1.1h-1.1zM629.3 272.5h1.1v1.1h-1.1zM73.9 352.3h1.1v1.1h-1.1zM248.5 425.5h1.1v1.1h-1.1zM434.0 361.6h1.1v1.1h-1.1zM611.1 229.2h1.1v1.1h-1.1zM659.7 12.5h1.1v1.1h-1.1zM232.8 376.3h1.1v1.1h-1.1zM6.6 302.3h1.1v1.1h-1.1zM681.4 321.5h1.1v1.1h-1.1zM588.1 35.4h1.1v1.1h-1.1zM369.0 274.1h1.1v1.1h-1.1zM297.6 188.9h1.1v1.1h-1.1zM539.4 73.8h1.1v1.1h-1.1zM31.6 266.7h1.1v1.1h-1.1zM659.2 371.6h1.1v1.1h-1.1zM459.4 133.1h1.1v1.1h-1.1zM616.9 19.0h1.1v1.1h-1.1zM169.0 354.1h1.1v1.1h-1.1zM610.3 181.5h1.1v1.1h-1.1zM620.1 50.7h1.1v1.1h-1.1zM407.5 31.3h1.1v1.1h-1.1zM159.9 86.1h1.1v1.1h-1.1zM5.3 182.6h1.1v1.1h-1.1zM341.6 126.9h1.1v1.1h-1.1zM444.8 24.5h1.1v1.1h-1.1zM353.4 237.4h1.1v1.1h-1.1zM275.5 410.8h1.1v1.1h-1.1zM87.2 192.2h1.1v1.1h-1.1zM314.1 168.0h1.1v1.1h-1.1zM664.1 257.2h1.1v1.1h-1.1zM352.7 198.1h1.1v1.1h-1.1zM298.9 427.0h1.1v1.1h-1.1zM545.2 291.1h1.1v1.1h-1.1zM111.6 267.3h1.1v1.1h-1.1zM88.1 158.2h1.1v1.1h-1.1zM16.7 316.9h1.1v1.1h-1.1zM666.6 286.8h1.1v1.1h-1.1zM389.0 113.2h1.1v1.1h-1.1zM302.3 209.1h1.1v1.1h-1.1zM289.1 121.7h1.1v1.1h-1.1zM150.4 337.3h1.1v1.1h-1.1zM649.6 368.9h1.1v1.1h-1.1zM424.3 13.5h1.1v1.1h-1.1zM206.8 377.3h1.1v1.1h-1.1zM663.4 246.4h1.1v1.1h-1.1zM388.4 308.5h1.1v1.1h-1.1zM169.3 320.0h1.1v1.1h-1.1zM249.6 380.5h1.1v1.1h-1.1zM315.4 298.2h1.1v1.1h-1.1zM379.7 240.5h1.1v1.1h-1.1zM314.9 427.6h1.1v1.1h-1.1zM515.0 189.1h1.1v1.1h-1.1zM345.2 403.2h1.1v1.1h-1.1zM509.7 293.6h1.1v1.1h-1.1zM654.0 53.5h1.1v1.1h-1.1zM408.2 280.7h1.1v1.1h-1.1zM310.6 432.5h1.1v1.1h-1.1zM659.8 176.0h1.1v1.1h-1.1zM420.7 344.0h1.1v1.1h-1.1zM475.1 163.5h1.1v1.1h-1.1zM544.6 157.3h1.1v1.1h-1.1zM101.0 298.7h1.1v1.1h-1.1zM443.1 184.0h1.1v1.1h-1.1zM340.7 443.6h1.1v1.1h-1.1zM551.3 183.3h1.1v1.1h-1.1zM621.9 256.5h1.1v1.1h-1.1zM276.8 290.8h1.1v1.1h-1.1zM534.6 402.5h1.1v1.1h-1.1zM457.5 300.0h1.1v1.1h-1.1zM274.0 19.0h1.1v1.1h-1.1zM310.7 52.2h1.1v1.1h-1.1zM642.7 163.4h1.1v1.1h-1.1zM413.0 329.5h1.1v1.1h-1.1zM122.6 374.4h1.1v1.1h-1.1zM222.8 37.0h1.1v1.1h-1.1zM409.4 181.2h1.1v1.1h-1.1zM626.9 200.2h1.1v1.1h-1.1zM65.3 9.3h1.1v1.1h-1.1zM21.7 222.1h1.1v1.1h-1.1zM487.3 24.0h1.1v1.1h-1.1zM225.6 215.3h1.1v1.1h-1.1zM612.3 435.8h1.1v1.1h-1.1zM596.9 287.2h1.1v1.1h-1.1zM392.6 100.9h1.1v1.1h-1.1zM418.0 75.3h1.1v1.1h-1.1zM207.5 372.9h1.1v1.1h-1.1zM387.9 326.3h1.1v1.1h-1.1zM317.9 126.2h1.1v1.1h-1.1zM344.0 257.8h1.1v1.1h-1.1zM165.6 379.8h1.1v1.1h-1.1zM669.2 82.2h1.1v1.1h-1.1zM165.9 364.5h1.1v1.1h-1.1zM492.6 101.8h1.1v1.1h-1.1zM400.0 107.7h1.1v1.1h-1.1zM588.6 264.2h1.1v1.1h-1.1zM348.9 73.4h1.1v1.1h-1.1zM277.3 212.9h1.1v1.1h-1.1zM247.4 81.6h1.1v1.1h-1.1zM136.0 314.7h1.1v1.1h-1.1zM630.9 379.1h1.1v1.1h-1.1zM420.0 355.4h1.1v1.1h-1.1zM92.0 95.1h1.1v1.1h-1.1zM480.2 1.6h1.1v1.1h-1.1zM58.2 349.9h1.1v1.1h-1.1zM135.1 83.8h1.1v1.1h-1.1zM270.3 375.9h1.1v1.1h-1.1zM8.1 394.1h1.1v1.1h-1.1zM208.6 256.8h1.1v1.1h-1.1zM322.8 55.5h1.1v1.1h-1.1zM653.6 79.8h1.1v1.1h-1.1zM549.2 394.8h1.1v1.1h-1.1zM310.1 431.2h1.1v1.1h-1.1zM43.8 67.2h1.1v1.1h-1.1zM330.4 34.5h1.1v1.1h-1.1zM551.1 236.9h1.1v1.1h-1.1zM545.0 129.3h1.1v1.1h-1.1zM19.5 399.9h1.1v1.1h-1.1zM142.9 187.8h1.1v1.1h-1.1zM86.6 263.9h1.1v1.1h-1.1zM316.9 89.7h1.1v1.1h-1.1zM27.7 152.3h1.1v1.1h-1.1zM534.6 70.0h1.1v1.1h-1.1zM156.5 278.1h1.1v1.1h-1.1zM433.5 361.4h1.1v1.1h-1.1zM440.3 381.7h1.1v1.1h-1.1zM106.8 414.1h1.1v1.1h-1.1zM20.6 54.3h1.1v1.1h-1.1zM71.6 348.2h1.1v1.1h-1.1zM344.6 413.8h1.1v1.1h-1.1zM664.9 427.6h1.1v1.1h-1.1zM419.2 158.4h1.1v1.1h-1.1zM652.8 329.2h1.1v1.1h-1.1zM134.5 248.8h1.1v1.1h-1.1zM14.9 8.8h1.1v1.1h-1.1zM436.0 323.3h1.1v1.1h-1.1zM587.4 338.4h1.1v1.1h-1.1zM94.2 331.6h1.1v1.1h-1.1zM669.2 304.2h1.1v1.1h-1.1zM328.3 133.1h1.1v1.1h-1.1zM44.4 281.2h1.1v1.1h-1.1zM656.0 52.5h1.1v1.1h-1.1zM560.0 403.2h1.1v1.1h-1.1zM240.9 379.9h1.1v1.1h-1.1zM107.1 135.7h1.1v1.1h-1.1zM386.7 395.0h1.1v1.1h-1.1zM365.8 41.0h1.1v1.1h-1.1zM634.3 257.1h1.1v1.1h-1.1zM531.4 103.9h1.1v1.1h-1.1zM229.0 41.4h1.1v1.1h-1.1z" fill="#778287"/><path d="M163.1 244.8h1.2v1.2h-1.2zM252.9 271.6h1.2v1.2h-1.2zM427.1 30.4h1.2v1.2h-1.2zM10.0 376.2h1.2v1.2h-1.2zM177.6 106.0h1.2v1.2h-1.2zM679.0 211.7h1.2v1.2h-1.2zM570.6 214.4h1.2v1.2h-1.2zM436.2 68.5h1.2v1.2h-1.2zM433.3 389.9h1.2v1.2h-1.2zM357.3 333.1h1.2v1.2h-1.2zM458.2 29.7h1.2v1.2h-1.2zM517.4 265.8h1.2v1.2h-1.2zM206.2 14.9h1.2v1.2h-1.2zM590.4 212.8h1.2v1.2h-1.2zM490.5 394.7h1.2v1.2h-1.2zM487.3 413.7h1.2v1.2h-1.2zM270.0 359.8h1.2v1.2h-1.2zM303.8 420.1h1.2v1.2h-1.2zM599.5 44.7h1.2v1.2h-1.2zM93.6 98.2h1.2v1.2h-1.2zM658.5 196.4h1.2v1.2h-1.2zM427.7 135.9h1.2v1.2h-1.2zM346.4 173.9h1.2v1.2h-1.2zM240.0 263.1h1.2v1.2h-1.2zM398.9 406.1h1.2v1.2h-1.2zM465.4 417.2h1.2v1.2h-1.2zM584.2 445.0h1.2v1.2h-1.2zM458.1 74.1h1.2v1.2h-1.2zM587.1 433.2h1.2v1.2h-1.2zM617.1 256.0h1.2v1.2h-1.2zM487.1 95.6h1.2v1.2h-1.2zM567.3 257.9h1.2v1.2h-1.2zM195.1 29.4h1.2v1.2h-1.2zM582.5 444.4h1.2v1.2h-1.2zM61.3 359.7h1.2v1.2h-1.2zM280.5 68.5h1.2v1.2h-1.2zM201.1 345.4h1.2v1.2h-1.2zM595.4 20.8h1.2v1.2h-1.2zM419.5 21.1h1.2v1.2h-1.2zM490.3 149.3h1.2v1.2h-1.2zM600.9 440.3h1.2v1.2h-1.2zM345.2 448.3h1.2v1.2h-1.2zM211.9 35.5h1.2v1.2h-1.2zM409.4 15.1h1.2v1.2h-1.2zM135.4 183.8h1.2v1.2h-1.2zM416.7 71.0h1.2v1.2h-1.2zM29.9 389.8h1.2v1.2h-1.2zM214.7 430.5h1.2v1.2h-1.2zM611.6 170.2h1.2v1.2h-1.2zM314.5 234.0h1.2v1.2h-1.2zM439.5 267.9h1.2v1.2h-1.2zM381.9 278.8h1.2v1.2h-1.2zM641.6 228.1h1.2v1.2h-1.2zM294.6 323.7h1.2v1.2h-1.2zM162.8 135.9h1.2v1.2h-1.2zM666.9 234.5h1.2v1.2h-1.2zM374.5 6.1h1.2v1.2h-1.2zM283.8 260.8h1.2v1.2h-1.2zM14.7 276.9h1.2v1.2h-1.2zM431.5 27.9h1.2v1.2h-1.2zM428.2 209.9h1.2v1.2h-1.2zM463.6 159.0h1.2v1.2h-1.2zM482.4 331.6h1.2v1.2h-1.2zM16.1 28.1h1.2v1.2h-1.2zM461.4 432.6h1.2v1.2h-1.2zM172.0 205.4h1.2v1.2h-1.2zM404.6 144.4h1.2v1.2h-1.2zM248.9 141.1h1.2v1.2h-1.2zM252.4 267.8h1.2v1.2h-1.2zM205.6 170.0h1.2v1.2h-1.2zM526.9 13.1h1.2v1.2h-1.2zM388.7 330.4h1.2v1.2h-1.2zM212.1 100.7h1.2v1.2h-1.2zM548.4 107.9h1.2v1.2h-1.2zM128.6 196.0h1.2v1.2h-1.2zM476.4 46.6h1.2v1.2h-1.2zM220.3 150.5h1.2v1.2h-1.2zM568.6 197.4h1.2v1.2h-1.2zM583.6 76.8h1.2v1.2h-1.2zM230.3 292.3h1.2v1.2h-1.2zM603.6 203.1h1.2v1.2h-1.2zM154.2 55.2h1.2v1.2h-1.2zM361.7 86.5h1.2v1.2h-1.2zM550.4 376.6h1.2v1.2h-1.2zM126.0 125.8h1.2v1.2h-1.2zM550.7 288.6h1.2v1.2h-1.2zM550.1 155.7h1.2v1.2h-1.2zM89.3 131.8h1.2v1.2h-1.2zM541.6 122.5h1.2v1.2h-1.2zM236.9 187.8h1.2v1.2h-1.2zM286.9 184.5h1.2v1.2h-1.2zM627.9 70.9h1.2v1.2h-1.2zM4.2 423.6h1.2v1.2h-1.2zM600.3 443.1h1.2v1.2h-1.2zM296.8 426.7h1.2v1.2h-1.2zM632.5 100.5h1.2v1.2h-1.2zM508.7 375.8h1.2v1.2h-1.2zM452.5 233.5h1.2v1.2h-1.2zM197.8 153.8h1.2v1.2h-1.2zM155.9 31.5h1.2v1.2h-1.2zM401.9 129.6h1.2v1.2h-1.2zM552.7 21.2h1.2v1.2h-1.2zM616.4 311.8h1.2v1.2h-1.2zM630.1 402.7h1.2v1.2h-1.2zM613.7 259.5h1.2v1.2h-1.2zM10.0 334.9h1.2v1.2h-1.2zM118.0 135.3h1.2v1.2h-1.2zM452.4 236.2h1.2v1.2h-1.2zM282.8 421.7h1.2v1.2h-1.2zM417.9 153.9h1.2v1.2h-1.2zM172.9 387.0h1.2v1.2h-1.2zM326.0 351.5h1.2v1.2h-1.2zM240.6 89.4h1.2v1.2h-1.2zM365.1 366.9h1.2v1.2h-1.2zM117.7 355.7h1.2v1.2h-1.2zM628.7 362.1h1.2v1.2h-1.2zM561.8 4.4h1.2v1.2h-1.2zM429.1 387.4h1.2v1.2h-1.2zM35.0 122.6h1.2v1.2h-1.2zM183.9 237.2h1.2v1.2h-1.2zM289.1 212.9h1.2v1.2h-1.2zM529.8 1.8h1.2v1.2h-1.2zM38.3 57.8h1.2v1.2h-1.2zM85.9 31.7h1.2v1.2h-1.2zM664.8 383.8h1.2v1.2h-1.2zM59.7 225.9h1.2v1.2h-1.2zM216.1 141.9h1.2v1.2h-1.2zM240.2 290.8h1.2v1.2h-1.2zM400.5 162.7h1.2v1.2h-1.2zM131.1 148.3h1.2v1.2h-1.2zM85.3 249.9h1.2v1.2h-1.2zM488.6 171.3h1.2v1.2h-1.2zM55.4 81.0h1.2v1.2h-1.2zM255.2 271.8h1.2v1.2h-1.2zM534.0 171.4h1.2v1.2h-1.2zM546.6 280.1h1.2v1.2h-1.2zM294.9 167.8h1.2v1.2h-1.2zM338.9 315.9h1.2v1.2h-1.2zM287.4 312.0h1.2v1.2h-1.2zM314.8 110.8h1.2v1.2h-1.2zM365.9 312.4h1.2v1.2h-1.2zM49.7 191.4h1.2v1.2h-1.2zM291.0 395.1h1.2v1.2h-1.2zM638.7 168.7h1.2v1.2h-1.2zM612.4 355.3h1.2v1.2h-1.2zM179.5 208.9h1.2v1.2h-1.2zM84.9 365.3h1.2v1.2h-1.2zM452.0 398.5h1.2v1.2h-1.2zM540.7 300.1h1.2v1.2h-1.2zM500.7 253.6h1.2v1.2h-1.2zM71.2 264.3h1.2v1.2h-1.2zM4.3 65.3h1.2v1.2h-1.2zM528.3 20.9h1.2v1.2h-1.2zM63.5 45.5h1.2v1.2h-1.2zM600.6 81.3h1.2v1.2h-1.2zM17.0 378.0h1.2v1.2h-1.2zM83.6 379.1h1.2v1.2h-1.2zM459.7 375.6h1.2v1.2h-1.2zM649.6 260.4h1.2v1.2h-1.2zM544.9 17.2h1.2v1.2h-1.2zM523.6 230.1h1.2v1.2h-1.2zM488.0 48.8h1.2v1.2h-1.2zM511.0 419.7h1.2v1.2h-1.2zM42.6 146.3h1.2v1.2h-1.2zM385.1 372.0h1.2v1.2h-1.2zM165.9 81.5h1.2v1.2h-1.2zM171.2 277.0h1.2v1.2h-1.2zM514.2 177.4h1.2v1.2h-1.2zM251.2 178.7h1.2v1.2h-1.2zM239.5 188.4h1.2v1.2h-1.2zM57.7 225.1h1.2v1.2h-1.2zM663.7 185.9h1.2v1.2h-1.2zM510.0 73.0h1.2v1.2h-1.2zM471.5 339.7h1.2v1.2h-1.2zM459.9 232.7h1.2v1.2h-1.2zM330.4 289.0h1.2v1.2h-1.2zM612.1 67.9h1.2v1.2h-1.2zM66.3 336.2h1.2v1.2h-1.2zM625.2 232.7h1.2v1.2h-1.2zM302.7 323.1h1.2v1.2h-1.2zM127.7 120.8h1.2v1.2h-1.2zM136.6 263.4h1.2v1.2h-1.2zM215.4 105.1h1.2v1.2h-1.2zM471.7 428.1h1.2v1.2h-1.2zM202.5 317.0h1.2v1.2h-1.2zM282.4 383.4h1.2v1.2h-1.2zM399.1 120.7h1.2v1.2h-1.2zM149.2 11.4h1.2v1.2h-1.2zM327.5 172.5h1.2v1.2h-1.2zM118.3 162.5h1.2v1.2h-1.2zM220.3 347.8h1.2v1.2h-1.2zM98.8 445.1h1.2v1.2h-1.2zM327.6 269.4h1.2v1.2h-1.2zM319.7 374.9h1.2v1.2h-1.2zM560.5 250.6h1.2v1.2h-1.2zM328.8 323.9h1.2v1.2h-1.2zM584.4 180.3h1.2v1.2h-1.2zM500.6 431.2h1.2v1.2h-1.2zM319.3 103.9h1.2v1.2h-1.2zM160.9 322.5h1.2v1.2h-1.2z" fill="#a4b8c1"/><path d="M161.7 47.2h1.5v1.5h-1.5zM270.7 70.4h1.5v1.5h-1.5zM46.3 180.9h1.5v1.5h-1.5zM626.1 359.6h1.5v1.5h-1.5zM522.1 100.4h1.5v1.5h-1.5zM366.5 125.0h1.5v1.5h-1.5zM118.6 48.6h1.5v1.5h-1.5zM147.0 416.5h1.5v1.5h-1.5zM565.5 362.4h1.5v1.5h-1.5zM546.1 87.7h1.5v1.5h-1.5zM212.0 281.9h1.5v1.5h-1.5zM499.4 383.9h1.5v1.5h-1.5zM600.3 39.8h1.5v1.5h-1.5zM413.6 301.9h1.5v1.5h-1.5zM345.6 80.6h1.5v1.5h-1.5zM323.5 41.0h1.5v1.5h-1.5zM637.5 388.7h1.5v1.5h-1.5zM373.9 135.5h1.5v1.5h-1.5zM619.9 257.4h1.5v1.5h-1.5zM601.9 380.9h1.5v1.5h-1.5zM347.2 186.4h1.5v1.5h-1.5zM408.9 194.1h1.5v1.5h-1.5zM110.9 137.7h1.5v1.5h-1.5zM554.4 20.4h1.5v1.5h-1.5zM32.5 281.6h1.5v1.5h-1.5zM192.0 240.5h1.5v1.5h-1.5zM321.9 154.6h1.5v1.5h-1.5zM680.1 88.6h1.5v1.5h-1.5zM282.1 91.8h1.5v1.5h-1.5zM431.8 124.8h1.5v1.5h-1.5zM243.3 335.6h1.5v1.5h-1.5zM219.4 251.2h1.5v1.5h-1.5zM616.8 46.2h1.5v1.5h-1.5zM43.0 103.5h1.5v1.5h-1.5zM522.1 276.7h1.5v1.5h-1.5zM162.7 149.3h1.5v1.5h-1.5zM121.9 206.6h1.5v1.5h-1.5zM30.2 313.4h1.5v1.5h-1.5zM611.1 428.7h1.5v1.5h-1.5zM501.5 431.0h1.5v1.5h-1.5zM13.4 130.5h1.5v1.5h-1.5zM658.9 348.3h1.5v1.5h-1.5zM280.5 423.6h1.5v1.5h-1.5zM423.6 367.4h1.5v1.5h-1.5zM200.8 86.8h1.5v1.5h-1.5zM303.5 62.1h1.5v1.5h-1.5zM260.9 431.9h1.5v1.5h-1.5zM226.6 5.2h1.5v1.5h-1.5zM31.5 77.0h1.5v1.5h-1.5zM534.7 163.5h1.5v1.5h-1.5zM198.7 44.5h1.5v1.5h-1.5zM669.6 190.9h1.5v1.5h-1.5zM142.6 27.6h1.5v1.5h-1.5zM38.6 76.6h1.5v1.5h-1.5zM461.9 68.0h1.5v1.5h-1.5zM28.8 220.8h1.5v1.5h-1.5zM170.6 447.9h1.5v1.5h-1.5zM84.3 238.1h1.5v1.5h-1.5zM528.0 184.4h1.5v1.5h-1.5zM673.6 215.0h1.5v1.5h-1.5z" fill="#d8ebf3"/><circle cx="271.2" cy="256.6" r="9.0" fill="url(#glow)"/><circle cx="271.2" cy="256.6" r="3.0" fill="#f4fcff"/><circle cx="354.8" cy="186.3" r="8.4" fill="url(#glow)"/><circle cx="354.8" cy="186.3" r="2.8" fill="#f4fcff"/><circle cx="411.5" cy="241.1" r="8.4" fill="url(#glow)"/><circle cx="411.5" cy="241.1" r="2.8" fill="#f4fcff"/><circle cx="385.5" cy="159.6" r="7.5" fill="url(#glow)"/><circle cx="385.5" cy="159.6" r="2.5" fill="#f4fcff"/><circle cx="182.2" cy="276.6" r="7.5" fill="url(#glow)"/><circle cx="182.2" cy="276.6" r="2.5" fill="#f4fcff"/><circle cx="346.0" cy="143.0" r="6.0" fill="url(#glow)"/><circle cx="346.0" cy="143.0" r="2.0" fill="#f4fcff"/><circle cx="179.5" cy="257.4" r="6.0" fill="url(#glow)"/><circle cx="179.5" cy="257.4" r="2.0" fill="#f4fcff"/><circle cx="411.5" cy="199.2" r="6.0" fill="url(#glow)"/><circle cx="411.5" cy="199.2" r="2.0" fill="#f4fcff"/><circle cx="339.3" cy="149.7" r="2.5" fill="#8fc3e0" opacity=".30"/><circle cx="339.3" cy="149.7" r="1.5" fill="#e6f6ff"/><circle cx="289.0" cy="156.4" r="2.5" fill="#8fc3e0" opacity=".30"/><circle cx="289.0" cy="156.4" r="1.5" fill="#e6f6ff"/><circle cx="265.3" cy="142.5" r="2.2" fill="#8fc3e0" opacity=".30"/><circle cx="265.3" cy="142.5" r="1.3" fill="#e6f6ff"/><circle cx="261.8" cy="125.7" r="2.0" fill="#8fc3e0" opacity=".30"/><circle cx="261.8" cy="125.7" r="1.2" fill="#e6f6ff"/><circle cx="211.6" cy="205.0" r="2.2" fill="#8fc3e0" opacity=".30"/><circle cx="211.6" cy="205.0" r="1.3" fill="#e6f6ff"/><circle cx="267.2" cy="213.3" r="2.2" fill="#8fc3e0" opacity=".30"/><circle cx="267.2" cy="213.3" r="1.3" fill="#e6f6ff"/><circle cx="323.8" cy="216.0" r="2.0" fill="#8fc3e0" opacity=".30"/><circle cx="323.8" cy="216.0" r="1.2" fill="#e6f6ff"/><circle cx="336.6" cy="228.5" r="2.0" fill="#8fc3e0" opacity=".30"/><circle cx="336.6" cy="228.5" r="1.2" fill="#e6f6ff"/><circle cx="334.5" cy="230.0" r="1.7" fill="#8fc3e0" opacity=".30"/><circle cx="334.5" cy="230.0" r="1.0" fill="#e6f6ff"/><circle cx="366.0" cy="192.8" r="2.2" fill="#8fc3e0" opacity=".30"/><circle cx="366.0" cy="192.8" r="1.3" fill="#e6f6ff"/><circle cx="448.0" cy="131.8" r="2.0" fill="#8fc3e0" opacity=".30"/><circle cx="448.0" cy="131.8" r="1.2" fill="#e6f6ff"/><circle cx="428.8" cy="173.0" r="2.0" fill="#8fc3e0" opacity=".30"/><circle cx="428.8" cy="173.0" r="1.2" fill="#e6f6ff"/><circle cx="467.0" cy="174.0" r="2.0" fill="#8fc3e0" opacity=".30"/><circle cx="467.0" cy="174.0" r="1.2" fill="#e6f6ff"/><circle cx="38.2" cy="26.2" r="3.1" fill="#8fc3e0" opacity=".30"/><circle cx="38.2" cy="26.2" r="1.8" fill="#e6f6ff"/><circle cx="219.0" cy="51.6" r="2.7" fill="#8fc3e0" opacity=".30"/><circle cx="219.0" cy="51.6" r="1.6" fill="#ffe0c0"/><circle cx="379.0" cy="72.0" r="2.9" fill="#8fc3e0" opacity=".30"/><circle cx="379.0" cy="72.0" r="1.7" fill="#e6f6ff"/><circle cx="450.5" cy="7.5" r="2.7" fill="#8fc3e0" opacity=".30"/><circle cx="450.5" cy="7.5" r="1.6" fill="#e6f6ff"/><circle cx="581.8" cy="11.3" r="2.7" fill="#8fc3e0" opacity=".30"/><circle cx="581.8" cy="11.3" r="1.6" fill="#e6f6ff"/><circle cx="589.0" cy="38.0" r="2.5" fill="#8fc3e0" opacity=".30"/><circle cx="589.0" cy="38.0" r="1.5" fill="#e6f6ff"/><circle cx="159.0" cy="359.0" r="2.7" fill="#8fc3e0" opacity=".30"/><circle cx="159.0" cy="359.0" r="1.6" fill="#e6f6ff"/><circle cx="145.0" cy="293.0" r="2.2" fill="#8fc3e0" opacity=".30"/><circle cx="145.0" cy="293.0" r="1.3" fill="#e6f6ff"/><circle cx="239.0" cy="389.0" r="2.5" fill="#8fc3e0" opacity=".30"/><circle cx="239.0" cy="389.0" r="1.5" fill="#e6f6ff"/><circle cx="279.0" cy="250.0" r="2.0" fill="#8fc3e0" opacity=".30"/><circle cx="279.0" cy="250.0" r="1.2" fill="#e6f6ff"/><circle cx="281.5" cy="246.5" r="1.9" fill="#8fc3e0" opacity=".30"/><circle cx="281.5" cy="246.5" r="1.1" fill="#e6f6ff"/><circle cx="283.5" cy="248.5" r="1.7" fill="#8fc3e0" opacity=".30"/><circle cx="283.5" cy="248.5" r="1.0" fill="#e6f6ff"/><circle cx="379.7" cy="72.0" r="2.5" fill="#8fc3e0" opacity=".30"/><circle cx="379.7" cy="72.0" r="1.5" fill="#e6f6ff"/><circle cx="355.0" cy="163.0" r="2.0" fill="#8fc3e0" opacity=".30"/><circle cx="355.0" cy="163.0" r="1.2" fill="#e6f6ff"/><circle cx="385.9" cy="159.6" r="2.5" fill="#8fc3e0" opacity=".30"/><circle cx="385.9" cy="159.6" r="1.5" fill="#e6f6ff"/><circle cx="448.0" cy="132.0" r="2.5" fill="#8fc3e0" opacity=".30"/><circle cx="448.0" cy="132.0" r="1.5" fill="#e6f6ff"/><circle cx="166.0" cy="196.0" r="2.4" fill="#8fc3e0" opacity=".30"/><circle cx="166.0" cy="196.0" r="1.4" fill="#e6f6ff"/><circle cx="173.0" cy="197.0" r="2.0" fill="#8fc3e0" opacity=".30"/><circle cx="173.0" cy="197.0" r="1.2" fill="#e6f6ff"/><circle cx="103.0" cy="177.0" r="2.2" fill="#8fc3e0" opacity=".30"/><circle cx="103.0" cy="177.0" r="1.3" fill="#e6f6ff"/><circle cx="92.0" cy="304.0" r="2.4" fill="#8fc3e0" opacity=".30"/><circle cx="92.0" cy="304.0" r="1.4" fill="#e6f6ff"/><circle cx="159.0" cy="329.0" r="2.4" fill="#8fc3e0" opacity=".30"/><circle cx="159.0" cy="329.0" r="1.4" fill="#e6f6ff"/><circle cx="279.0" cy="335.0" r="2.2" fill="#8fc3e0" opacity=".30"/><circle cx="279.0" cy="335.0" r="1.3" fill="#e6f6ff"/><circle cx="291.0" cy="294.0" r="2.0" fill="#8fc3e0" opacity=".30"/><circle cx="291.0" cy="294.0" r="1.2" fill="#e6f6ff"/><circle cx="291.0" cy="314.0" r="2.0" fill="#8fc3e0" opacity=".30"/><circle cx="291.0" cy="314.0" r="1.2" fill="#e6f6ff"/><circle cx="266.0" cy="170.0" r="2.2" fill="#8fc3e0" opacity=".30"/><circle cx="266.0" cy="170.0" r="1.3" fill="#e6f6ff"/><circle cx="290.0" cy="156.0" r="2.5" fill="#8fc3e0" opacity=".30"/><circle cx="290.0" cy="156.0" r="1.5" fill="#e6f6ff"/><circle cx="259.0" cy="213.0" r="2.4" fill="#8fc3e0" opacity=".30"/><circle cx="259.0" cy="213.0" r="1.4" fill="#e6f6ff"/><circle cx="212.0" cy="205.0" r="2.4" fill="#8fc3e0" opacity=".30"/><circle cx="212.0" cy="205.0" r="1.4" fill="#e6f6ff"/><circle cx="323.0" cy="216.0" r="2.2" fill="#8fc3e0" opacity=".30"/><circle cx="323.0" cy="216.0" r="1.3" fill="#e6f6ff"/><circle cx="437.0" cy="242.0" r="2.0" fill="#8fc3e0" opacity=".30"/><circle cx="437.0" cy="242.0" r="1.2" fill="#e6f6ff"/><circle cx="467.0" cy="174.0" r="2.2" fill="#8fc3e0" opacity=".30"/><circle cx="467.0" cy="174.0" r="1.3" fill="#e6f6ff"/><circle cx="614.0" cy="139.0" r="2.0" fill="#8fc3e0" opacity=".30"/><circle cx="614.0" cy="139.0" r="1.2" fill="#e6f6ff"/><circle cx="430.0" cy="173.0" r="2.0" fill="#8fc3e0" opacity=".30"/><circle cx="430.0" cy="173.0" r="1.2" fill="#e6f6ff"/><circle cx="548.0" cy="56.0" r="2.0" fill="#8fc3e0" opacity=".30"/><circle cx="548.0" cy="56.0" r="1.2" fill="#e6f6ff"/><circle cx="530.0" cy="59.0" r="1.9" fill="#8fc3e0" opacity=".30"/><circle cx="530.0" cy="59.0" r="1.1" fill="#e6f6ff"/><circle cx="615.0" cy="103.0" r="1.9" fill="#8fc3e0" opacity=".30"/><circle cx="615.0" cy="103.0" r="1.1" fill="#e6f6ff"/><line x1="30.7" y1="28.9" x2="615.5" y2="430.6" stroke="#000" stroke-width="1"/><line x1="30.7" y1="28.9" x2="615.5" y2="430.6" stroke="#fff" stroke-width="0.9" stroke-dasharray="4 12" stroke-dashoffset="-6" opacity=".85"/></svg>
<div class="a" style="left:768px;top:105px;width:501px;height:436px;background:#6f84e0;border-radius:7px 7px 0 0;box-shadow:inset 1px 0 0 #5a64cc,inset -1px 0 0 #4a4cb8,inset 0 -1px 0 #4c4cb8,inset 2px 0 0 #7a8ee6,inset -2px 0 0 #6a78d8,inset 0 -2px 0 #6674d4"></div>
<div class="a" style="left:768px;top:105px;width:501px;height:29px;background:linear-gradient(to bottom,#7a98e6 0,#9db6ea 1px,#9db6ea 2.5px,#86a2e6 3.5px,#7994de 5px,#7a96df 14px,#7e9ee4 18px,#83aae9 23px,#83aae9 25px,#7e9ee4 26.5px,#7690e2 27.5px,#7690e2 29px);border-radius:7px 7px 0 0;box-shadow:inset 1px 0 0 #6a78d8,inset -1px 0 0 #5a64cc"></div>
<div class="a" style="left:771px;top:134px;width:495px;height:404px;background:#ece9d8;"></div>
<div class="a" style="left:771px;top:134px;width:495px;height:1px;background:#a8a490;"></div>
<div class="a" style="left:771px;top:134px;width:1px;height:404px;background:#a8a490;"></div>
<div class="a" style="left:772px;top:135px;width:493px;height:1px;background:#716f64;"></div>
<div class="a" style="left:772px;top:135px;width:1px;height:402px;background:#716f64;"></div>
<div class="a" style="left:773px;top:136px;width:491px;height:1px;background:#f5f2e3;"></div>
<div class="a" style="left:772px;top:537px;width:494px;height:1px;background:#fff;"></div>
<div class="a" style="left:1265px;top:135px;width:1px;height:403px;background:#fff;"></div>
<div class="a" style="left:773px;top:536px;width:492px;height:1px;background:#f5f2e3;"></div>
<div class="a" style="left:1264px;top:136px;width:1px;height:401px;background:#f5f2e3;"></div>
<div class="t" style="left:774.5px;top:114.75px;font:bold 13.5px/1 'Liberation Sans',sans-serif;color:#dfe7fa;transform:scaleX(1.0075);transform-origin:0 0;">Line Profile - m45tutorial1aflatten.tif</div>
<div class="a" style="left:1243px;top:110px;width:21px;height:21px;border:1px solid #b9c8f3;border-radius:3px;background:linear-gradient(135deg,#c08fa2 0,#b5677b 50%,#ad6075 100%)"></div>
<svg style="left:1243px;top:110px" width="21" height="21" viewBox="0 0 21 21"><path d="M6 6L15 15M15 6L6 15" stroke="#fff" stroke-width="2" fill="none" stroke-linecap="square"/></svg>
<div class="a" style="left:822px;top:155px;width:401px;height:271px;background:transparent;border:1px solid #000"></div>
<div class="a" style="left:822px;top:221px;width:401px;height:1px;background:#000;"></div>
<div class="a" style="left:822px;top:289px;width:401px;height:1px;background:#000;"></div>
<div class="a" style="left:822px;top:357px;width:401px;height:1px;background:#000;"></div>
<div class="a" style="left:1022px;top:155px;width:1px;height:271px;background:#000;"></div>
<div class="t" style="left:784.6px;top:154.75px;font:12.5px/1 'Liberation Sans',sans-serif;color:#000;transform:scaleX(0.8574);transform-origin:0 0;">65535</div>
<div class="t" style="left:784.6px;top:214.75px;font:12.5px/1 'Liberation Sans',sans-serif;color:#000;transform:scaleX(0.8574);transform-origin:0 0;">49152</div>
<div class="t" style="left:784.6px;top:282.75px;font:12.5px/1 'Liberation Sans',sans-serif;color:#000;transform:scaleX(0.8574);transform-origin:0 0;">32768</div>
<div class="t" style="left:784.6px;top:351.75px;font:12.5px/1 'Liberation Sans',sans-serif;color:#000;transform:scaleX(0.8574);transform-origin:0 0;">16384</div>
<div class="t" style="left:800.5px;top:411.75px;font:12.5px/1 'Liberation Sans',sans-serif;color:#000;transform:scaleX(0.8631);transform-origin:0 0;">0</div>
<div class="t" style="left:1226px;top:154.75px;font:12.5px/1 'Liberation Sans',sans-serif;color:#000;transform:scaleX(0.8871);transform-origin:0 0;">255</div>
<div class="t" style="left:1226px;top:214.75px;font:12.5px/1 'Liberation Sans',sans-serif;color:#000;transform:scaleX(0.8871);transform-origin:0 0;">190</div>
<div class="t" style="left:1226px;top:282.75px;font:12.5px/1 'Liberation Sans',sans-serif;color:#000;transform:scaleX(0.8871);transform-origin:0 0;">127</div>
<div class="t" style="left:1226px;top:351.75px;font:12.5px/1 'Liberation Sans',sans-serif;color:#000;transform:scaleX(0.8991);transform-origin:0 0;">63</div>
<div class="t" style="left:1226px;top:411.75px;font:12.5px/1 'Liberation Sans',sans-serif;color:#000;transform:scaleX(0.8631);transform-origin:0 0;">0</div>
<div class="t" style="left:844.6px;top:141.75px;font:12.5px/1 'Liberation Sans',sans-serif;color:#000;transform:scaleX(0.8424);transform-origin:0 0;">(130, 120)</div>
<div class="t" style="left:988.3px;top:141.75px;font:12.5px/1 'Liberation Sans',sans-serif;color:#000;transform:scaleX(0.8446);transform-origin:0 0;">(1305, 928)</div>
<div class="t" style="left:1132.5px;top:141.75px;font:12.5px/1 'Liberation Sans',sans-serif;color:#000;transform:scaleX(0.8464);transform-origin:0 0;">(2481, 1736)</div>
<svg style="left:0;top:0" width="1280" height="1024"><polyline points="825,347.8 826,348.0 827,349.0 828,347.8 829,347.9 830,348.0 831,347.0 832,347.8 833,348.1 834,348.5 835,346.6 836,347.1 837,346.6 838,348.4 839,348.1 840,346.3 841,348.8 842,337.0 843,345.0 844,347.7 845,322.0 846,274.0 847,296.0 848,341.0 849,346.4 850,346.5 851,345.9 852,347.0 853,346.9 854,347.9 855,347.0 856,347.3 857,346.9 858,347.3 859,346.7 860,346.2 861,348.0 862,348.0 863,347.5 864,347.2 865,346.1 866,345.8 867,345.9 868,345.3 869,347.1 870,346.1 871,347.2 872,346.0 873,347.4 874,347.1 875,344.8 876,345.3 877,347.1 878,345.9 879,347.2 880,345.6 881,344.7 882,346.1 883,346.5 884,345.1 885,344.6 886,345.2 887,346.8 888,346.2 889,344.5 890,344.8 891,344.3 892,344.2 893,346.0 894,344.4 895,345.3 896,345.0 897,344.3 898,345.6 899,341.0 900,344.0 901,343.9 902,344.6 903,344.0 904,344.1 905,345.9 906,345.4 907,344.0 908,345.5 909,343.7 910,344.1 911,345.2 912,344.6 913,343.2 914,345.4 915,343.4 916,343.4 917,344.7 918,343.5 919,343.4 920,342.7 921,342.7 922,343.9 923,343.0 924,343.9 925,343.2 926,343.4 927,344.6 928,343.3 929,343.5 930,344.2 931,330.0 932,288.0 933,306.0 934,343.9 935,340.0 936,343.0 937,343.5 938,343.9 939,341.9 940,343.8 941,343.6 942,342.8 943,342.3 944,341.4 945,341.2 946,343.5 947,341.6 948,342.7 949,341.5 950,342.9 951,342.3 952,341.4 953,341.1 954,342.4 955,340.7 956,341.0 957,341.8 958,342.5 959,341.8 960,340.9 961,342.5 962,340.6 963,340.0 964,340.6 965,341.0 966,339.9 967,340.2 968,340.6 969,341.1 970,339.9 971,340.4 972,341.7 973,341.9 974,341.0 975,341.0 976,340.7 977,339.5 978,339.1 979,339.0 980,341.3 981,340.7 982,341.3 983,339.0 984,340.3 985,339.8 986,340.4 987,339.3 988,341.0 989,338.5 990,339.7 991,340.1 992,340.5 993,340.0 994,339.8 995,340.0 996,340.2 997,338.7 998,339.5 999,340.0 1000,339.8 1001,338.6 1002,339.5 1003,339.6 1004,338.8 1005,338.9 1006,338.2 1007,338.6 1008,338.6 1009,337.2 1010,338.6 1011,339.4 1012,339.1 1013,338.6 1014,337.6 1015,338.5 1016,338.0 1017,337.6 1018,338.5 1019,336.5 1020,338.2 1021,336.2 1022,337.6 1023,337.3 1024,336.5 1025,337.7 1026,337.1 1027,337.3 1028,338.1 1029,336.3 1030,335.6 1031,336.2 1032,337.1 1033,335.8 1034,335.7 1035,337.5 1036,336.8 1037,336.2 1038,337.3 1039,335.7 1040,336.5 1041,335.3 1042,335.8 1043,336.7 1044,336.9 1045,336.7 1046,335.4 1047,335.8 1048,335.1 1049,334.5 1050,335.4 1051,336.4 1052,336.6 1053,336.3 1054,337.0 1055,335.4 1056,335.2 1057,336.0 1058,335.7 1059,335.6 1060,336.2 1061,336.9 1062,336.6 1063,336.3 1064,337.7 1065,338.2 1066,336.9 1067,336.0 1068,336.0 1069,338.3 1070,336.2 1071,338.0 1072,337.7 1073,337.2 1074,338.5 1075,336.6 1076,337.0 1077,337.9 1078,336.9 1079,339.0 1080,337.6 1081,337.4 1082,337.3 1083,338.9 1084,338.5 1085,339.0 1086,339.2 1087,339.7 1088,340.1 1089,339.5 1090,338.3 1091,339.1 1092,338.4 1093,338.1 1094,333.0 1095,340.1 1096,338.8 1097,339.1 1098,339.4 1099,340.4 1100,340.0 1101,340.3 1102,340.8 1103,339.9 1104,341.0 1105,331.0 1106,336.0 1107,341.6 1108,341.2 1109,339.7 1110,334.0 1111,341.2 1112,342.0 1113,340.7 1114,341.2 1115,342.1 1116,342.0 1117,342.5 1118,341.3 1119,341.9 1120,340.8 1121,342.2 1122,302.0 1123,318.0 1124,259.0 1125,296.0 1126,312.0 1127,343.3 1128,318.0 1129,327.0 1130,343.1 1131,330.0 1132,343.5 1133,338.0 1134,342.2 1135,341.6 1136,342.6 1137,334.0 1138,343.6 1139,343.0 1140,341.9 1141,344.0 1142,342.1 1143,344.1 1144,342.6 1145,336.0 1146,344.3 1147,342.7 1148,342.8 1149,343.8 1150,344.4 1151,344.8 1152,344.5 1153,345.3 1154,344.1 1155,345.4 1156,343.2 1157,343.7 1158,344.5 1159,344.0 1160,342.0 1161,345.1 1162,344.8 1163,345.7 1164,345.1 1165,344.5 1166,344.8 1167,346.0 1168,346.3 1169,344.5 1170,346.3 1171,346.7 1172,345.6 1173,345.8 1174,344.9 1175,345.8 1176,345.8 1177,346.2 1178,344.7 1179,347.3 1180,346.2 1181,345.9 1182,347.0 1183,346.5 1184,346.4 1185,347.0 1186,345.4 1187,346.7 1188,346.5 1189,348.0 1190,348.0 1191,346.3 1192,346.9 1193,346.1 1194,347.0 1195,348.0 1196,348.3 1197,347.3 1198,347.0 1199,346.7 1200,347.9 1201,348.8 1202,346.8 1203,348.5 1204,346.6 1205,346.0 1206,347.3 1207,348.6 1208,347.7 1209,347.9 1210,348.6 1211,347.4 1212,349.1 1213,347.6 1214,348.6 1215,348.0 1216,348.0 1217,348.9 1218,348.7" fill="none" stroke="#fff" stroke-width="1"/></svg>
<div class="t" style="left:784.7px;top:433.75px;font:12.5px/1 'Liberation Sans',sans-serif;color:#000;transform:scaleX(0.8306);transform-origin:0 0;">Max:</div>
<div class="t" style="left:813px;top:433.75px;font:12.5px/1 'Liberation Sans',sans-serif;color:#000;transform:scaleX(0.8393);transform-origin:0 0;">40401 - 157</div>
<div class="t" style="left:792px;top:451.75px;font:12.5px/1 'Liberation Sans',sans-serif;color:#000;transform:scaleX(0.7881);transform-origin:0 0;">@</div>
<div class="t" style="left:811.8px;top:451.75px;font:12.5px/1 'Liberation Sans',sans-serif;color:#000;transform:scaleX(0.8394);transform-origin:0 0;">(1313, 1346)</div>
<div class="t" style="left:908.3px;top:433.75px;font:12.5px/1 'Liberation Sans',sans-serif;color:#000;transform:scaleX(0.8258);transform-origin:0 0;">Min:</div>
<div class="t" style="left:934.5px;top:433.75px;font:12.5px/1 'Liberation Sans',sans-serif;color:#000;transform:scaleX(0.8365);transform-origin:0 0;">18404 - 71</div>
<div class="t" style="left:913.6px;top:450.75px;font:12.5px/1 'Liberation Sans',sans-serif;color:#000;transform:scaleX(0.7881);transform-origin:0 0;">@</div>
<div class="t" style="left:932px;top:450.75px;font:12.5px/1 'Liberation Sans',sans-serif;color:#000;transform:scaleX(0.8512);transform-origin:0 0;">(170, 148)</div>
<div class="t" style="left:1016px;top:433.75px;font:12.5px/1 'Liberation Sans',sans-serif;color:#000;transform:scaleX(0.8473);transform-origin:0 0;">Avg:</div>
<div class="t" style="left:1045.5px;top:433.75px;font:12.5px/1 'Liberation Sans',sans-serif;color:#000;transform:scaleX(0.8330);transform-origin:0 0;">20189.1 -</div>
<div class="t" style="left:1098.5px;top:433.75px;font:12.5px/1 'Liberation Sans',sans-serif;color:#000;transform:scaleX(0.8838);transform-origin:0 0;">78.9</div>
<div class="t" style="left:1135.8px;top:433.75px;font:12.5px/1 'Liberation Sans',sans-serif;color:#000;transform:scaleX(0.7973);transform-origin:0 0;">Current:</div>
<div class="t" style="left:1158px;top:450.75px;font:12.5px/1 'Liberation Sans',sans-serif;color:#000;transform:scaleX(0.7881);transform-origin:0 0;">@</div>
<div class="grp" style="left:784px;top:478px;width:253px;height:45px"></div>
<div class="a" style="left:790px;top:474px;width:71px;height:10px;background:#ece9d8;"></div>
<div class="t" style="left:793.5px;top:472.75px;font:12.5px/1 'Liberation Sans',sans-serif;color:#000;transform:scaleX(0.8197);transform-origin:0 0;">Color Channel</div>
<div class="rb" style="left:794.5px;top:494px"></div>
<div class="a" style="left:798.5px;top:498px;width:4px;height:4px;border-radius:50%;background:#000"></div>
<div class="t" style="left:811.6px;top:493.75px;font:12.5px/1 'Liberation Sans',sans-serif;color:#000;transform:scaleX(0.8118);transform-origin:0 0;">Luminosity</div>
<div class="rb" style="left:872px;top:495px"></div>
<div class="t" style="left:889.7px;top:495.75px;font:12.5px/1 'Liberation Sans',sans-serif;color:#000;transform:scaleX(0.8504);transform-origin:0 0;">Red</div>
<div class="rb" style="left:927.5px;top:494px"></div>
<div class="t" style="left:944.8px;top:494.75px;font:12.5px/1 'Liberation Sans',sans-serif;color:#000;transform:scaleX(0.8204);transform-origin:0 0;">Green</div>
<div class="rb" style="left:989.5px;top:494px"></div>
<div class="t" style="left:1006.6px;top:493.75px;font:12.5px/1 'Liberation Sans',sans-serif;color:#000;transform:scaleX(0.8194);transform-origin:0 0;">Blue</div>
<div class="t" style="left:1048.4px;top:479.75px;font:12.5px/1 'Liberation Sans',sans-serif;color:#000;transform:scaleX(0.8303);transform-origin:0 0;">Profile Type:</div>
<div class="sunk" style="left:1109px;top:477px;width:139px;height:19px;background:#fff"></div>
<div class="t" style="left:1113.4px;top:480.75px;font:12.5px/1 'Liberation Sans',sans-serif;color:#000;transform:scaleX(0.8359);transform-origin:0 0;">Line Segment Profile</div>
<div class="btn" style="left:1230px;top:479px;width:16px;height:15px"></div>
<svg style="left:1234px;top:484px" width="8" height="5" viewBox="0 0 8 5"><path d="M0.5 0.5h7L4 4.5z" fill="#000"/></svg>
<div class="t" style="left:1048.4px;top:508.75px;font:12.5px/1 'Liberation Sans',sans-serif;color:#000;transform:scaleX(0.7201);transform-origin:0 0;">From:</div>
<div class="t" style="left:1078.5px;top:508.75px;font:12.5px/1 'Liberation Sans',sans-serif;color:#000;transform:scaleX(0.8599);transform-origin:0 0;">(130, 120)</div>
<div class="t" style="left:1157px;top:508.75px;font:12.5px/1 'Liberation Sans',sans-serif;color:#000;transform:scaleX(0.7796);transform-origin:0 0;">To:</div>
<div class="t" style="left:1177.5px;top:508.75px;font:12.5px/1 'Liberation Sans',sans-serif;color:#000;transform:scaleX(0.8535);transform-origin:0 0;">(2481, 1736)</div>
<div class="a" style="left:794px;top:568px;width:425px;height:318px;background:#6f84e0;border-radius:7px 7px 0 0;box-shadow:inset 1px 0 0 #5a64cc,inset -1px 0 0 #4a4cb8,inset 0 -1px 0 #4c4cb8,inset 2px 0 0 #7a8ee6,inset -2px 0 0 #6a78d8,inset 0 -2px 0 #6674d4"></div>
<div class="a" style="left:794px;top:568px;width:425px;height:29px;background:linear-gradient(to bottom,#7a98e6 0,#9db6ea 1px,#9db6ea 2.5px,#86a2e6 3.5px,#7994de 5px,#7a96df 14px,#7e9ee4 18px,#83aae9 23px,#83aae9 25px,#7e9ee4 26.5px,#7690e2 27.5px,#7690e2 29px);border-radius:7px 7px 0 0;box-shadow:inset 1px 0 0 #6a78d8,inset -1px 0 0 #5a64cc"></div>
<div class="a" style="left:797px;top:597px;width:419px;height:286px;background:#ece9d8;"></div>
<div class="t" style="left:800.8px;top:577.75px;font:bold 13.5px/1 'Liberation Sans',sans-serif;color:#dfe7fa;transform:scaleX(0.9714);transform-origin:0 0;">Background Compensation - m45tutorial1aflatten.tif</div>
<div class="a" style="left:1193px;top:573px;width:21px;height:21px;border:1px solid #b9c8f3;border-radius:3px;background:linear-gradient(135deg,#c08fa2 0,#b5677b 50%,#ad6075 100%)"></div>
<svg style="left:1193px;top:573px" width="21" height="21" viewBox="0 0 21 21"><path d="M6 6L15 15M15 6L6 15" stroke="#fff" stroke-width="2" fill="none" stroke-linecap="square"/></svg>
<div class="a" style="left:803px;top:624px;width:1px;height:255px;background:#fff;"></div>
<div class="a" style="left:803px;top:624px;width:406px;height:1px;background:#fff;"></div>
<div class="a" style="left:1209px;top:624px;width:1px;height:256px;background:#716f64;"></div>
<div class="a" style="left:1208px;top:625px;width:1px;height:254px;background:#aca899;"></div>
<div class="a" style="left:803px;top:879px;width:407px;height:1px;background:#716f64;"></div>
<div class="a" style="left:804px;top:878px;width:405px;height:1px;background:#aca899;"></div>
<div class="a" style="left:862px;top:607px;width:40px;height:17px;background:#ece9d8;border-top:1px solid #fff;border-left:1px solid #fff;border-right:1px solid #716f64;box-shadow:inset -1px 0 0 #aca899;border-radius:2px 2px 0 0"></div>
<div class="a" style="left:902px;top:607px;width:96px;height:17px;background:#ece9d8;border-top:1px solid #fff;border-left:1px solid #fff;border-right:1px solid #716f64;box-shadow:inset -1px 0 0 #aca899;border-radius:2px 2px 0 0"></div>
<div class="a" style="left:803px;top:604px;width:60px;height:21px;background:#ece9d8;border-top:1px solid #fff;border-left:1px solid #fff;border-right:1px solid #716f64;box-shadow:inset -1px 0 0 #aca899;border-radius:2px 2px 0 0"></div>
<div class="t" style="left:811.3px;top:607.75px;font:12.5px/1 'Liberation Sans',sans-serif;color:#000;transform:scaleX(0.8332);transform-origin:0 0;">Gaussian</div>
<div class="t" style="left:867.5px;top:609.75px;font:12.5px/1 'Liberation Sans',sans-serif;color:#000;transform:scaleX(0.8165);transform-origin:0 0;">Planar</div>
<div class="t" style="left:909.4px;top:609.75px;font:12.5px/1 'Liberation Sans',sans-serif;color:#000;transform:scaleX(0.8363);transform-origin:0 0;">Piece-wise Linear</div>
<div class="cb" style="left:827px;top:647px"></div>
<div class="t" style="left:845.5px;top:647.75px;font:12.5px/1 'Liberation Sans',sans-serif;color:#000;transform:scaleX(0.8489);transform-origin:0 0;">Select Background Maximum</div>
<div class="t" style="left:1001.7px;top:647.75px;font:12.5px/1 'Liberation Sans',sans-serif;color:#000;transform:scaleX(0.8410);transform-origin:0 0;">Background Maximum:</div>
<div class="t" style="left:1117.5px;top:647.75px;font:12.5px/1 'Liberation Sans',sans-serif;color:#000;transform:scaleX(0.8290);transform-origin:0 0;">(327, 1789)</div>
<div class="t" style="left:906.6px;top:667.75px;font:12.5px/1 'Liberation Sans',sans-serif;color:#000;transform:scaleX(0.8526);transform-origin:0 0;">Dark</div>
<div class="t" style="left:1062.8px;top:667.75px;font:12.5px/1 'Liberation Sans',sans-serif;color:#000;transform:scaleX(0.8116);transform-origin:0 0;">Bright</div>
<div class="a" style="left:921px;top:685px;width:1px;height:4px;background:#000;"></div>
<div class="a" style="left:937px;top:686px;width:1px;height:3px;background:#000;"></div>
<div class="a" style="left:952px;top:686px;width:1px;height:3px;background:#000;"></div>
<div class="a" style="left:968px;top:686px;width:1px;height:3px;background:#000;"></div>
<div class="a" style="left:983px;top:686px;width:1px;height:3px;background:#000;"></div>
<div class="a" style="left:999px;top:686px;width:1px;height:3px;background:#000;"></div>
<div class="a" style="left:1015px;top:686px;width:1px;height:3px;background:#000;"></div>
<div class="a" style="left:1030px;top:686px;width:1px;height:3px;background:#000;"></div>
<div class="a" style="left:1046px;top:686px;width:1px;height:3px;background:#000;"></div>
<div class="a" style="left:1061px;top:686px;width:1px;height:3px;background:#000;"></div>
<div class="a" style="left:1077px;top:685px;width:1px;height:4px;background:#000;"></div>
<div class="a" style="left:916px;top:700px;width:167px;height:1px;background:#9d9a8a;"></div>
<div class="a" style="left:916px;top:701px;width:167px;height:1px;background:#716f64;"></div>
<div class="a" style="left:916px;top:702px;width:167px;height:2px;background:#fff;"></div>
<div class="a" style="left:916px;top:700px;width:1px;height:3px;background:#9d9a8a;"></div>
<svg style="left:957px;top:690px" width="11" height="21" viewBox="0 0 11 21"><path d="M0.500 5.500L5.500 0.500L10.500 5.500V20.500H0.500z" fill="#ece9d8" stroke="#716f64"/><path d="M1.500 5.800L5.500 1.800M1.500 5.500V19.500" stroke="#fff" fill="none"/><path d="M9.500 6V19.500H1.500" stroke="#aca899" fill="none"/><path d="M0.500 5.500L5.500 0.500M0.500 5.500V20" stroke="#fff" fill="none"/></svg>
<div class="t" style="left:851.9px;top:691.75px;font:12.5px/1 'Liberation Sans',sans-serif;color:#000;transform:scaleX(0.8213);transform-origin:0 0;">Amplitude:</div>
<div class="sunk" style="left:1106px;top:688px;width:51px;height:20px"></div>
<div class="t" style="left:1123.2px;top:691.75px;font:12.5px/1 'Liberation Sans',sans-serif;color:#000;transform:scaleX(0.8221);transform-origin:0 0;">0.26</div>
<div class="t" style="left:893.2px;top:724.75px;font:12.5px/1 'Liberation Sans',sans-serif;color:#000;transform:scaleX(0.8443);transform-origin:0 0;">Larger ( 0.0 )</div>
<div class="t" style="left:1041.6px;top:724.75px;font:12.5px/1 'Liberation Sans',sans-serif;color:#000;transform:scaleX(0.8226);transform-origin:0 0;">Smaller ( 100.0 )</div>
<div class="a" style="left:919px;top:742px;width:1px;height:4px;background:#000;"></div>
<div class="a" style="left:935px;top:743px;width:1px;height:3px;background:#000;"></div>
<div class="a" style="left:950px;top:743px;width:1px;height:3px;background:#000;"></div>
<div class="a" style="left:966px;top:743px;width:1px;height:3px;background:#000;"></div>
<div class="a" style="left:981px;top:743px;width:1px;height:3px;background:#000;"></div>
<div class="a" style="left:997px;top:743px;width:1px;height:3px;background:#000;"></div>
<div class="a" style="left:1013px;top:743px;width:1px;height:3px;background:#000;"></div>
<div class="a" style="left:1028px;top:743px;width:1px;height:3px;background:#000;"></div>
<div class="a" style="left:1044px;top:743px;width:1px;height:3px;background:#000;"></div>
<div class="a" style="left:1059px;top:743px;width:1px;height:3px;background:#000;"></div>
<div class="a" style="left:1075px;top:742px;width:1px;height:4px;background:#000;"></div>
<div class="a" style="left:914px;top:757px;width:167px;height:1px;background:#9d9a8a;"></div>
<div class="a" style="left:914px;top:758px;width:167px;height:1px;background:#716f64;"></div>
<div class="a" style="left:914px;top:759px;width:167px;height:2px;background:#fff;"></div>
<div class="a" style="left:914px;top:757px;width:1px;height:3px;background:#9d9a8a;"></div>
<svg style="left:922px;top:747px" width="11" height="21" viewBox="0 0 11 21"><path d="M0.500 5.500L5.500 0.500L10.500 5.500V20.500H0.500z" fill="#ece9d8" stroke="#716f64"/><path d="M1.500 5.800L5.500 1.800M1.500 5.500V19.500" stroke="#fff" fill="none"/><path d="M9.500 6V19.500H1.500" stroke="#aca899" fill="none"/><path d="M0.500 5.500L5.500 0.500M0.500 5.500V20" stroke="#fff" fill="none"/></svg>
<div class="t" style="left:869px;top:750.75px;font:12.5px/1 'Liberation Sans',sans-serif;color:#000;transform:scaleX(0.8491);transform-origin:0 0;">Scale:</div>
<div class="sunk" style="left:1106px;top:745px;width:51px;height:20px"></div>
<div class="t" style="left:1121.6px;top:748.75px;font:12.5px/1 'Liberation Sans',sans-serif;color:#000;transform:scaleX(0.8426);transform-origin:0 0;">5.00</div>
<div class="grp" style="left:818px;top:777px;width:377px;height:50px"></div>
<div class="a" style="left:824px;top:773px;width:46px;height:10px;background:#ece9d8;"></div>
<div class="t" style="left:826.9px;top:771.75px;font:12.5px/1 'Liberation Sans',sans-serif;color:#000;transform:scaleX(0.8470);transform-origin:0 0;">Variation</div>
<div class="rb" style="left:853px;top:788px"></div>
<div class="a" style="left:857px;top:792px;width:4px;height:4px;border-radius:50%;background:#000"></div>
<div class="t" style="left:870.6px;top:788.75px;font:12.5px/1 'Liberation Sans',sans-serif;color:#000;transform:scaleX(0.8584);transform-origin:0 0;">Subtract Background Image</div>
<div class="rb" style="left:853px;top:807px"></div>
<div class="t" style="left:870.6px;top:807.75px;font:12.5px/1 'Liberation Sans',sans-serif;color:#000;transform:scaleX(0.8502);transform-origin:0 0;">Display Background Image</div>
<div class="cb" style="left:1059px;top:796px"></div>
<div class="t" style="left:1077.6px;top:796.75px;font:12.5px/1 'Liberation Sans',sans-serif;color:#000;transform:scaleX(0.8596);transform-origin:0 0;">Use Negative</div>
<div class="cb" style="left:821px;top:832px"></div>
<svg style="left:821px;top:832.5px" width="13" height="13" viewBox="0 0 13 13"><path d="M3 5.5l2.2 2.4L10 3.2" stroke="#000" stroke-width="2" fill="none"/></svg>
<div class="t" style="left:839.3px;top:832.75px;font:12.5px/1 'Liberation Sans',sans-serif;color:#000;transform:scaleX(0.8313);transform-origin:0 0;">Enable Sliders</div>
<div class="cb" style="left:921px;top:832px"></div>
<div class="t" style="left:938.1px;top:832.75px;font:12.5px/1 'Liberation Sans',sans-serif;color:#000;transform:scaleX(0.8744);transform-origin:0 0;">Lock Image</div>
<div class="cb" style="left:821px;top:851px"></div>
<div class="t" style="left:839.3px;top:851.75px;font:12.5px/1 'Liberation Sans',sans-serif;color:#000;transform:scaleX(0.8609);transform-origin:0 0;">To All Images</div>
<div class="btn" style="left:1040px;top:842px;width:75px;height:23px"></div>
<div class="t" style="left:1064px;top:846.75px;font:12.5px/1 'Liberation Sans',sans-serif;color:#000;transform:scaleX(0.8315);transform-origin:0 0;">Apply</div>
<div class="btn" style="left:1121px;top:842px;width:75px;height:23px"></div>
<div class="t" style="left:1145.5px;top:846.75px;font:12.5px/1 'Liberation Sans',sans-serif;color:#000;transform:scaleX(0.8534);transform-origin:0 0;">Done</div>
<svg style="left:0;top:0" width="1280" height="1024"><polygon points="429.9,679.7 398.6,449.2 408.3,447.9 389.5,401.0 383.9,451.2 393.6,449.9 424.9,680.3" fill="#fff"/><polygon points="436.0,682.9 979.0,370.8 983.6,378.8 1020.0,343.8 971.5,357.7 976.0,365.6 433.0,677.7" fill="#fff"/></svg>
<div class="t" style="left:198.6px;top:697.00px;font:18px/1 'Liberation Serif',serif;color:#fff;letter-spacing:0.017px;">Gradual rise in luminosity shown in Line Profile peaks at</div>
<div class="t" style="left:178px;top:721.00px;font:18px/1 'Liberation Serif',serif;color:#fff;letter-spacing:0.005px;">chosen maximum point of image where vignetting is greatest.</div>
<div class="t" style="left:266.9px;top:745.00px;font:18px/1 'Liberation Serif',serif;color:#fff;letter-spacing:-0.010px;">This will be corrected in the next step.</div>
<div class="a" style="left:0px;top:990px;width:1280px;height:34px;background:linear-gradient(to bottom,#3a80e0 0,#348ae8 1.5px,#2f7ce2 2.5px,#2f78e0 3.5px,#3068d0 4.5px,#4088e6 5.5px,#4890e8 6.5px,#3474e0 7.5px,#2a66dc 8.5px,#2359d6 9.5px,#2258d6 13px,#235cdb 20px,#2662de 28px,#2560dc 31px,#2356cc 32.5px,#1e44b0 34px);"></div>
<div class="a" style="left:0;top:994px;width:97px;height:30px;border-radius:0 9px 11px 0/0 13px 16px 0;background:linear-gradient(to bottom,#2f8a36 0,#5cb260 1.5px,#7cc47c 3px,#4ba54e 5px,#3c9a40 8px,#38983b 14px,#3aa03c 22px,#339437 27px,#2a7a2f 30px);box-shadow:inset -3px -1px 4px #1f6a25,inset 2px 0 2px #2a7a30"></div>
<svg style="left:9.500px;top:999px" width="21" height="19" viewBox="0 0 20 18"><g stroke="#3a5a3a" stroke-width=".5"><path d="M3.500 1.500c2-1.200 4-1.200 6 0l-1.400 6.300c-2-1.200-4-1.200-6 0z" fill="#f2632a"/><path d="M10.700 2.500c2 1.200 4 1.200 6 0l-1.400 6.300c-2 1.200-4 1.200-6 0z" fill="#8ccf2b"/><path d="M1.700 9.200c2-1.200 4-1.200 6 0l-1.400 6.300c-2-1.200-4-1.200-6 0z" fill="#4a7ff0"/><path d="M8.900 10.200c2 1.200 4 1.200 6 0l-1.400 6.300c-2 1.200-4 1.200-6 0z" fill="#f8cf2a"/></g></svg>
<div class="t" style="left:34.5px;top:1000.00px;font:bold 18px/1 'Liberation Sans',sans-serif;color:#fff;letter-spacing:-0.303px;font-style:italic;text-shadow:1px 1px 1px #1d5a22;">start</div>
<div class="a" style="left:107px;top:1001px;width:2px;height:2px;background:#4aa0f0;"></div>
<div class="a" style="left:106px;top:1000px;width:2px;height:2px;background:#1a3fae;"></div>
<div class="a" style="left:107px;top:1007px;width:2px;height:2px;background:#4aa0f0;"></div>
<div class="a" style="left:106px;top:1006px;width:2px;height:2px;background:#1a3fae;"></div>
<div class="a" style="left:107px;top:1013px;width:2px;height:2px;background:#4aa0f0;"></div>
<div class="a" style="left:106px;top:1012px;width:2px;height:2px;background:#1a3fae;"></div>
<div class="a" style="left:107px;top:1019px;width:2px;height:2px;background:#4aa0f0;"></div>
<div class="a" style="left:106px;top:1018px;width:2px;height:2px;background:#1a3fae;"></div>
<div class="a" style="left:111px;top:1004px;width:2px;height:2px;background:#4aa0f0;"></div>
<div class="a" style="left:110px;top:1003px;width:2px;height:2px;background:#1a3fae;"></div>
<div class="a" style="left:111px;top:1010px;width:2px;height:2px;background:#4aa0f0;"></div>
<div class="a" style="left:110px;top:1009px;width:2px;height:2px;background:#1a3fae;"></div>
<div class="a" style="left:111px;top:1016px;width:2px;height:2px;background:#4aa0f0;"></div>
<div class="a" style="left:110px;top:1015px;width:2px;height:2px;background:#1a3fae;"></div>
<div class="a" style="left:117px;top:997px;width:158px;height:24px;border-radius:3px;background:linear-gradient(to bottom,#5a9cf8 0,#3f84f0 3px,#3a7eee 18px,#3575e6 24px);box-shadow:inset 0 0 0 1px #2f6fe0"></div>
<div class="a" style="left:277px;top:997px;width:158px;height:24px;border-radius:3px;background:linear-gradient(to bottom,#1a47b0 0,#1f52c4 4px,#2057ca 24px);box-shadow:inset 1px 1px 1px #12358f"></div>
<svg style="left:126px;top:1001px" width="17" height="17" viewBox="0 0 17 17"><rect x="1" y="3" width="13" height="13" rx="2" fill="#fff" stroke="#c8c8c8"/><path d="M4 14l8-11 3 1-7 11z" fill="#f0a030"/><path d="M10 4l3-3 2 2-2 3z" fill="#508030"/><path d="M4 14l2-3 2 2z" fill="#3060c0"/></svg>
<div class="t" style="left:145px;top:1003.50px;font:11px/1 'Liberation Sans',sans-serif;color:#fff;letter-spacing:0.093px;">Adobe Photoshop - [...</div>
<svg style="left:288px;top:1001px" width="16" height="16" viewBox="0 0 16 16"><rect width="16" height="16" fill="#000"/><g fill="none" stroke="#6e6e08" stroke-width="0.8"><circle cx="11.98" cy="10.30" r="2.0"/><circle cx="8.00" cy="12.60" r="2.0"/><circle cx="4.02" cy="10.30" r="2.0"/><circle cx="4.02" cy="5.70" r="2.0"/><circle cx="8.00" cy="3.40" r="2.0"/><circle cx="11.98" cy="5.70" r="2.0"/></g><g fill="#f6f600"><ellipse cx="8" cy="4.900" rx="1.350" ry="2.100" transform="rotate(0 8 8)"/><ellipse cx="8" cy="4.900" rx="1.350" ry="2.100" transform="rotate(60 8 8)"/><ellipse cx="8" cy="4.900" rx="1.350" ry="2.100" transform="rotate(120 8 8)"/><ellipse cx="8" cy="4.900" rx="1.350" ry="2.100" transform="rotate(180 8 8)"/><ellipse cx="8" cy="4.900" rx="1.350" ry="2.100" transform="rotate(240 8 8)"/><ellipse cx="8" cy="4.900" rx="1.350" ry="2.100" transform="rotate(300 8 8)"/><circle cx="8" cy="8" r="1.500"/></g><g fill="#3c3c00"><circle cx="10.17" cy="9.25" r=".5"/><circle cx="8.00" cy="10.50" r=".5"/><circle cx="5.83" cy="9.25" r=".5"/><circle cx="5.83" cy="6.75" r=".5"/><circle cx="8.00" cy="5.50" r=".5"/><circle cx="10.17" cy="6.75" r=".5"/><circle cx="8" cy="5.300" r=".45"/><circle cx="8" cy="10.700" r=".45"/></g></svg>
<div class="t" style="left:306px;top:1003.50px;font:11px/1 'Liberation Sans',sans-serif;color:#fff;letter-spacing:-0.347px;">ImagesPlus</div>
<div class="a" style="left:778px;top:1001px;width:2px;height:2px;background:#4aa0f0;"></div>
<div class="a" style="left:777px;top:1000px;width:2px;height:2px;background:#1a3fae;"></div>
<div class="a" style="left:778px;top:1007px;width:2px;height:2px;background:#4aa0f0;"></div>
<div class="a" style="left:777px;top:1006px;width:2px;height:2px;background:#1a3fae;"></div>
<div class="a" style="left:778px;top:1013px;width:2px;height:2px;background:#4aa0f0;"></div>
<div class="a" style="left:777px;top:1012px;width:2px;height:2px;background:#1a3fae;"></div>
<div class="a" style="left:778px;top:1019px;width:2px;height:2px;background:#4aa0f0;"></div>
<div class="a" style="left:777px;top:1018px;width:2px;height:2px;background:#1a3fae;"></div>
<div class="a" style="left:782px;top:1004px;width:2px;height:2px;background:#4aa0f0;"></div>
<div class="a" style="left:781px;top:1003px;width:2px;height:2px;background:#1a3fae;"></div>
<div class="a" style="left:782px;top:1010px;width:2px;height:2px;background:#4aa0f0;"></div>
<div class="a" style="left:781px;top:1009px;width:2px;height:2px;background:#1a3fae;"></div>
<div class="a" style="left:782px;top:1016px;width:2px;height:2px;background:#4aa0f0;"></div>
<div class="a" style="left:781px;top:1015px;width:2px;height:2px;background:#1a3fae;"></div>
<div class="t" style="left:786.4px;top:1003.50px;font:11px/1 'Liberation Sans',sans-serif;color:#b6cdf7;letter-spacing:-0.050px;">Desktop</div>
<div class="t" style="left:834.5px;top:995.50px;font:14px/1 'Liberation Sans',sans-serif;color:#e4ecfc;">»</div>
<div class="a" style="left:851px;top:1001px;width:2px;height:2px;background:#4aa0f0;"></div>
<div class="a" style="left:850px;top:1000px;width:2px;height:2px;background:#1a3fae;"></div>
<div class="a" style="left:851px;top:1007px;width:2px;height:2px;background:#4aa0f0;"></div>
<div class="a" style="left:850px;top:1006px;width:2px;height:2px;background:#1a3fae;"></div>
<div class="a" style="left:851px;top:1013px;width:2px;height:2px;background:#4aa0f0;"></div>
<div class="a" style="left:850px;top:1012px;width:2px;height:2px;background:#1a3fae;"></div>
<div class="a" style="left:851px;top:1019px;width:2px;height:2px;background:#4aa0f0;"></div>
<div class="a" style="left:850px;top:1018px;width:2px;height:2px;background:#1a3fae;"></div>
<div class="a" style="left:855px;top:1004px;width:2px;height:2px;background:#4aa0f0;"></div>
<div class="a" style="left:854px;top:1003px;width:2px;height:2px;background:#1a3fae;"></div>
<div class="a" style="left:855px;top:1010px;width:2px;height:2px;background:#4aa0f0;"></div>
<div class="a" style="left:854px;top:1009px;width:2px;height:2px;background:#1a3fae;"></div>
<div class="a" style="left:855px;top:1016px;width:2px;height:2px;background:#4aa0f0;"></div>
<div class="a" style="left:854px;top:1015px;width:2px;height:2px;background:#1a3fae;"></div>
<div class="t" style="left:859.5px;top:1003.50px;font:11px/1 'Liberation Sans',sans-serif;color:#b6cdf7;letter-spacing:-0.059px;">Favorites</div>
<div class="t" style="left:912.8px;top:995.50px;font:14px/1 'Liberation Sans',sans-serif;color:#e4ecfc;">»</div>
<div class="a" style="left:935px;top:994px;width:345px;height:30px;background:linear-gradient(to bottom,#1a5ac0 0,#18b6f6 1.5px,#16a8f0 3px,#1398e8 6px,#1294e6 12px,#1294e6 20px,#0ea0f0 26px,#0e96e6 28.5px,#0c70c0 30px);"></div>
<div class="a" style="left:935px;top:994px;width:1px;height:30px;background:#0a3070;"></div>
<div class="a" style="left:936px;top:995px;width:1px;height:29px;background:linear-gradient(to bottom,#18c0f8,#14a8f0 50%,#18d0ff);"></div>
<div class="t" style="left:1224.3px;top:1003.50px;font:11px/1 'Liberation Sans',sans-serif;color:#fff;letter-spacing:-0.123px;">9:14 AM</div>
<svg style="left:945.4px;top:1001px;will-change:opacity" width="16" height="16" viewBox="0 0 16 16"><ellipse cx="10" cy="10.500" rx="3.500" ry="1.800" fill="#e8e0f4"/><rect x="6.500" y="0.500" width="7.500" height="6.500" fill="#383860" stroke="#c0b0e0"/><path d="M9 7.500h3v2H9z" fill="#a898d8"/><ellipse cx="4.800" cy="13.300" rx="3.600" ry="1.900" fill="#f0ecf8"/><rect x="1.500" y="3.500" width="7" height="6.500" fill="#383860" stroke="#c8b8e4"/><path d="M3.500 10.500h3v2h-3z" fill="#a898d8"/></svg>
<svg style="left:963.5px;top:1001px;will-change:opacity" width="16" height="16" viewBox="0 0 16 16"><rect x="0" y="0" width="16" height="15.500" fill="#c2c2c2"/><path d="M0 15.500V0h16" fill="none" stroke="#e4e4e4" stroke-width="1.200"/><path d="M0 15.500h16V0" fill="none" stroke="#8a8a8a" stroke-width="1"/><text x="8" y="13" text-anchor="middle" font-family="Liberation Sans,sans-serif" font-size="13" fill="#8c8c8c">A</text></svg>
<svg style="left:981.6px;top:1001px;will-change:opacity" width="16" height="16" viewBox="0 0 16 16"><rect x="0" y="0" width="16" height="16" fill="#fff"/><rect x="2.500" y="2" width="11.500" height="2.600" fill="#10d020" stroke="#106018" stroke-width=".7"/><text x="8.300" y="14.300" text-anchor="middle" font-family="Liberation Sans,sans-serif" font-size="12.500" font-weight="bold" fill="#000">1</text></svg>
<svg style="left:999.7px;top:1001px;will-change:opacity" width="16" height="16" viewBox="0 0 16 16"><path d="M1 9.500c0-2 1.500-3 2.500-4.500l1-3c.8-.6 1.500 0 1.500 1l-.4 3.500c1.500.3 3 1 3.400 2l-1 .8c1.500.8 2.500 1.700 3 2.200l-1 1.500c-1.500-.5-2.500-1-3.500-1-2 1.300-4 1.500-5 .5-1-.6-1.500-1.800-1.500-3z" fill="#fff" stroke="#000" stroke-width=".9"/><circle cx="14.200" cy="2.500" r="1.600" fill="#f01010"/><rect x="13" y="6" width="2.400" height="9.500" rx=".8" fill="#208080" stroke="#909090" stroke-width=".6"/></svg>
<svg style="left:1017.8px;top:1001px;will-change:opacity" width="16" height="16" viewBox="0 0 16 16"><path d="M3 1.500l7-1.500 2 6-7 2z" fill="#d8ecff" stroke="#a0b8d8" stroke-width=".6"/><path d="M1 8.500l4-2.500h8l2.500 2.500v4l-3.500 3h-8L1 12.500z" fill="#e8e8e8" stroke="#808080" stroke-width=".7"/><path d="M1 8.500l3 2h8.500l3-2M4 10.500v5M12.500 10.500v4.500" stroke="#909090" stroke-width=".7" fill="none"/><path d="M4.500 12h7.500M4.500 13.500h7.500" stroke="#b0b0b0" stroke-width=".7"/><rect x="10.500" y="11.300" width="1.500" height="1" fill="#20c020"/></svg>
<svg style="left:1035.9px;top:1001px;will-change:opacity" width="16" height="16" viewBox="0 0 16 16"><path d="M8 1.200A6.800 6.800 0 0 0 4 13.600" fill="none" stroke="#f01010" stroke-width="2"/><path d="M8 14.800A6.800 6.800 0 0 0 12 2.400" fill="none" stroke="#1020e0" stroke-width="2"/><path d="M3.500 10.500l5-1-2 5z" fill="#f01010"/><path d="M12.500 5.500l-5 1 2-5z" fill="#1020e0"/></svg>
<svg style="left:1054.0px;top:1001px;will-change:opacity" width="16" height="16" viewBox="0 0 16 16"><ellipse cx="6" cy="6.500" rx="5.500" ry="6" fill="#8c8c8c" stroke="#505050" stroke-width=".8" transform="rotate(-20 6 6.500)"/><ellipse cx="6.500" cy="6.500" rx="3" ry="3.600" fill="#c8c8c8" transform="rotate(-20 6 6.500)"/><ellipse cx="7" cy="6.500" rx="1.300" ry="1.600" fill="#606060"/><path d="M9.500 14.500l5-4M11 15.500l4.500-3" stroke="#b0a8f0" stroke-width=".9"/></svg>
<svg style="left:1072.1px;top:1001px;will-change:opacity" width="16" height="16" viewBox="0 0 16 16"><path d="M3 9l8-3 4 3.500-1 3-8 3-4-3z" fill="#a8a8b8" stroke="#606070" stroke-width=".7"/><path d="M5 11l7-2.500M6 12.500l7-2.500" stroke="#404868" stroke-width="1"/><path d="M1 4l4-3.500v2c2.500 0 4 1.500 4 4l-2.500 1c0-1.500-.5-2.500-1.500-2.500v2.500z" fill="#30c030" stroke="#108010" stroke-width=".5"/></svg>
<svg style="left:1090.2px;top:1001px;will-change:opacity" width="16" height="16" viewBox="0 0 16 16"><path d="M7.500 3.500c-3-1-6.500 1-6.500 4.500s3.500 5 7 3.500c3-1 5-3.500 4-6-1-2-3-2.600-4.500-2z" fill="none" stroke="#000" stroke-width="2"/><circle cx="8.500" cy="4.500" r="1.700" fill="#f0e020"/><path d="M9 5.500l4 8" stroke="#f0e020" stroke-width="2.400" stroke-linecap="round"/></svg>
<svg style="left:1108.3px;top:1001px;will-change:opacity" width="16" height="16" viewBox="0 0 16 16"><rect x="0" y="0" width="16" height="16" fill="#fff"/><rect x="1.200" y="1.200" width="13.600" height="13.600" rx="1.500" fill="#d83020"/><path d="M1.200 8h13.600v5.300a1.500 1.500 0 0 1-1.500 1.500H2.700a1.500 1.500 0 0 1-1.500-1.500z" fill="#c82818"/><text x="8.200" y="13.300" text-anchor="middle" font-family="Liberation Sans,sans-serif" font-size="13.500" font-weight="bold" fill="#fff">?</text></svg>
<svg style="left:1126.4px;top:1001px;will-change:opacity" width="16" height="16" viewBox="0 0 16 16"><path d="M1.500 3.500c2-3.500 6-3 8.500.5l4.500 6.500c1.500 2.500-1 5-4.500 4.500-2 0-3.500-1.500-4.500-3L2 7c-1-1.500-1-2.500-.5-3.500z" fill="#fff" stroke="#202020" stroke-width="1"/><path d="M5 1.800l2.500 4M2.500 6c2-1 4.500-2 6-3" stroke="#a0a0a0" stroke-width=".7" fill="none"/><circle cx="8" cy="7" r=".8" fill="#d02020"/></svg>
<svg style="left:1144.5px;top:1001px;will-change:opacity" width="16" height="16" viewBox="0 0 16 16"><circle cx="6.500" cy="6.500" r="6" fill="#3058c8" stroke="#102878" stroke-width=".8"/><circle cx="6.500" cy="6.500" r="3.600" fill="#a8c0f0"/><path d="M6.500 3.500a3 3 0 1 0 2.500 4.500" fill="none" stroke="#203888" stroke-width="1.300"/><path d="M9.500 10l6-2.500v3l-4.500 3.500z" fill="#808890" stroke="#404850" stroke-width=".6"/></svg>
<svg style="left:1162.6px;top:1001px;will-change:opacity" width="16" height="16" viewBox="0 0 16 16"><path d="M8 0.500h4v3h3.500v4H12v3H8v-3H5v-4h3z" fill="#f05060"/><path d="M9 1.500h2v3h3.500" stroke="#ffc0c8" stroke-width=".8" fill="none"/><ellipse cx="3.500" cy="12.500" rx="2.500" ry="2" fill="#c8c8c8" stroke="#686868" stroke-width=".6"/><path d="M0 12.500h2M6 12.500h3" stroke="#e8e040" stroke-width="1.400"/><rect x="9.500" y="10.500" width="6" height="5.500" fill="#303030"/><rect x="11" y="12" width="3" height="1" fill="#40e0e0"/><rect x="11" y="14" width="3" height="1" fill="#e0e040"/></svg>
<svg style="left:1180.7px;top:1001px;will-change:opacity" width="16" height="16" viewBox="0 0 16 16"><rect x="-1" y="-0.500" width="17.500" height="16.500" fill="#000"/><text x="7.800" y="14.300" text-anchor="middle" font-family="Liberation Sans,sans-serif" font-size="18" fill="#fff" textLength="14.500" lengthAdjust="spacingAndGlyphs">M</text></svg>
<svg style="left:1198.8px;top:1001px;will-change:opacity" width="16" height="16" viewBox="0 0 16 16"><circle cx="3.800" cy="8.500" r="2.500" fill="#f01010"/><circle cx="4.300" cy="8" r=".8" fill="#f0e020"/><path d="M7 0.500c1.500-.5 2.500.5 3 2l2.500 8.500c2 .5 3 2 3 4h-4.500c-1.500-1-2.500-3-3-6z" fill="#1428b8"/><circle cx="8.500" cy="2.200" r=".6" fill="#fff"/></svg>
</body></html>
